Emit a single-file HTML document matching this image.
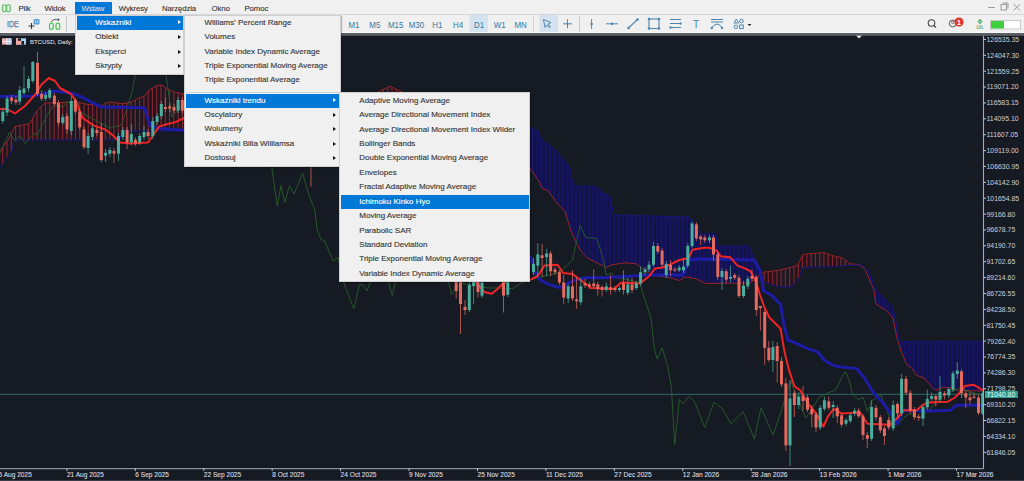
<!DOCTYPE html>
<html><head><meta charset="utf-8"><style>
html,body{margin:0;padding:0;}
body{width:1024px;height:481px;overflow:hidden;position:relative;background:#161a23;font-family:"Liberation Sans",sans-serif;}
.mb{position:absolute;left:0;top:0;width:1024px;height:14px;background:#f0f0f0;}
.mi{position:absolute;top:0;height:14px;line-height:17px;font-size:7.8px;letter-spacing:-0.1px;color:#2b2b2b;-webkit-text-stroke:0.08px #2b2b2b;}
.menu{position:absolute;background:#f0f0f0;border:1px solid #cfcfcf;box-sizing:border-box;box-shadow:1px 1px 1px rgba(0,0,0,0.25);}
.it{position:absolute;left:0;right:0;height:14.4px;font-size:8px;letter-spacing:0px;line-height:14.4px;color:#3a3a3a;white-space:nowrap;-webkit-text-stroke:0.15px #3a3a3a;}
.it.sel{background:#0078d7;color:#ffffff;-webkit-text-stroke:0.12px #ffffff;}
.arr{position:absolute;width:0;height:0;border-top:2.5px solid transparent;border-bottom:2.5px solid transparent;border-left:3px solid #111;top:4.7px;}
.sel .arr{border-left-color:#fff;}
.sep{position:absolute;left:1px;right:1px;height:1px;background:#d4d4d4;}
</style></head><body>
<svg width="1024" height="481" viewBox="0 0 1024 481" style="position:absolute;left:0;top:0"><rect x="0" y="34" width="1024" height="447" fill="#161a23"/><path d="M0.0,151.0 L0.5,150.3 L1.0,149.7 L1.5,149.0 L2.0,148.3 L2.5,147.7 L3.0,147.0 L3.5,146.3 L4.0,145.7 L4.5,145.0 L5.0,144.3 L5.5,143.7 L6.0,143.0 L6.5,142.3 L7.0,141.7 L7.5,141.0 L8.0,140.0 L8.5,139.1 L9.0,138.1 L9.5,137.1 L10.0,136.1 L10.5,135.2 L11.0,134.2 L11.5,133.2 L12.0,132.2 L12.5,131.3 L13.0,130.3 L13.5,129.3 L14.0,128.3 L14.5,127.4 L15.0,126.4 L15.5,126.3 L16.0,126.2 L16.5,126.1 L17.0,126.0 L17.5,125.9 L18.0,125.8 L18.5,125.8 L19.0,125.7 L19.5,125.6 L20.0,125.5 L20.5,125.4 L21.0,125.3 L21.5,125.2 L22.0,125.1 L22.5,125.0 L23.0,124.9 L23.5,124.8 L24.0,124.7 L24.5,124.6 L25.0,124.6 L25.5,124.5 L26.0,124.4 L26.5,124.3 L27.0,124.2 L27.5,124.1 L28.0,124.0 L28.5,123.8 L29.0,123.5 L29.5,123.2 L30.0,123.0 L30.5,122.1 L31.0,121.3 L31.5,120.4 L32.0,119.5 L32.5,118.7 L33.0,117.8 L33.5,116.9 L34.0,116.1 L34.5,115.2 L35.0,114.3 L35.5,113.5 L36.0,112.6 L36.5,111.7 L37.0,110.9 L37.5,110.0 L38.0,109.5 L38.5,109.1 L39.0,108.6 L39.5,108.1 L40.0,107.7 L40.5,107.2 L41.0,106.7 L41.5,106.3 L42.0,105.8 L42.5,105.3 L43.0,104.9 L43.5,104.4 L44.0,103.9 L44.5,103.5 L45.0,103.0 L45.5,103.0 L46.0,103.0 L46.5,103.0 L47.0,102.9 L47.5,102.9 L48.0,102.9 L48.5,102.9 L49.0,102.9 L49.5,102.9 L50.0,102.8 L50.5,102.8 L51.0,102.8 L51.5,102.8 L52.0,102.8 L52.5,102.8 L53.0,102.7 L53.5,102.7 L54.0,102.7 L54.5,102.7 L55.0,102.7 L55.5,102.7 L56.0,102.7 L56.5,102.6 L57.0,102.6 L57.5,102.6 L58.0,102.6 L58.5,102.6 L59.0,102.6 L59.5,102.5 L60.0,102.5 L60.5,102.5 L61.0,102.5 L61.5,102.5 L62.0,102.5 L62.5,102.5 L63.0,102.4 L63.5,102.4 L64.0,102.4 L64.5,102.4 L65.0,102.4 L65.5,102.4 L66.0,102.3 L66.5,102.3 L67.0,102.3 L67.5,102.3 L68.0,102.3 L68.5,102.3 L69.0,102.2 L69.5,102.2 L70.0,102.2 L70.5,102.2 L71.0,102.2 L71.5,102.2 L72.0,102.2 L72.5,102.1 L73.0,102.1 L73.5,102.1 L74.0,102.1 L74.5,102.1 L75.0,102.1 L75.5,102.0 L76.0,102.0 L76.5,102.0 L77.0,102.0 L77.5,102.1 L78.0,102.3 L78.5,102.4 L79.0,102.5 L79.5,102.6 L80.0,102.7 L80.5,102.8 L81.0,102.9 L81.5,103.0 L82.0,103.2 L82.5,103.3 L83.0,103.4 L83.5,103.5 L84.0,103.6 L84.5,103.7 L85.0,103.8 L85.5,104.0 L86.0,104.1 L86.5,104.2 L87.0,104.3 L87.5,104.3 L88.0,104.4 L88.5,104.4 L89.0,104.5 L89.5,104.5 L90.0,104.5 L90.5,104.6 L91.0,104.6 L91.5,104.7 L92.0,104.7 L92.5,104.7 L93.0,104.8 L93.5,104.8 L94.0,104.9 L94.5,104.9 L95.0,104.9 L95.5,105.0 L96.0,105.0 L96.5,105.1 L97.0,105.1 L97.5,105.1 L98.0,105.2 L98.5,105.2 L99.0,105.3 L99.5,105.3 L100.0,105.3 L100.5,105.4 L101.0,105.4 L101.5,105.5 L102.0,105.5 L102.5,105.2 L103.0,104.8 L103.5,104.5 L104.0,104.2 L104.5,103.9 L105.0,103.5 L105.5,103.2 L106.0,103.1 L106.5,103.0 L107.0,102.9 L107.5,102.8 L108.0,102.7 L108.5,102.5 L109.0,102.4 L109.5,102.3 L110.0,102.2 L110.5,102.1 L111.0,102.0 L111.5,102.1 L112.0,102.2 L112.5,102.2 L113.0,102.3 L113.5,102.4 L114.0,102.5 L114.5,102.5 L115.0,102.6 L115.5,102.7 L116.0,102.8 L116.5,102.9 L117.0,102.9 L117.5,103.0 L118.0,103.1 L118.5,103.2 L119.0,103.2 L119.5,103.3 L120.0,103.4 L120.5,103.5 L121.0,103.6 L121.5,103.6 L122.0,103.7 L122.5,103.8 L123.0,103.7 L123.5,103.6 L124.0,103.5 L124.5,103.4 L125.0,103.3 L125.5,103.2 L126.0,103.1 L126.5,103.0 L127.0,102.9 L127.5,102.8 L128.0,102.7 L128.5,102.6 L129.0,102.5 L129.5,102.5 L130.0,102.4 L130.5,102.3 L131.0,102.2 L131.5,102.1 L132.0,101.9 L132.5,101.6 L133.0,101.3 L133.5,101.0 L134.0,100.7 L134.5,100.4 L135.0,100.1 L135.5,99.9 L136.0,99.6 L136.5,99.3 L137.0,99.0 L137.5,98.7 L138.0,98.4 L138.5,98.1 L139.0,97.9 L139.5,97.8 L140.0,97.6 L140.5,97.5 L141.0,97.3 L141.5,97.2 L142.0,97.0 L142.5,96.9 L143.0,96.7 L143.5,96.6 L144.0,96.4 L144.5,96.2 L145.0,95.4 L145.5,94.7 L146.0,93.9 L146.5,93.2 L147.0,92.4 L147.5,91.7 L148.0,91.1 L148.5,90.7 L149.0,90.4 L149.5,90.1 L150.0,89.8 L150.5,89.4 L151.0,89.1 L151.5,88.8 L152.0,88.5 L152.5,88.1 L153.0,87.8 L153.5,87.5 L154.0,87.2 L154.5,86.8 L155.0,86.5 L155.5,86.2 L156.0,86.0 L156.5,85.9 L157.0,85.8 L157.5,85.7 L158.0,85.6 L158.5,85.5 L159.0,85.4 L159.5,85.3 L160.0,85.2 L160.5,85.1 L161.0,85.0 L161.5,84.9 L162.0,85.2 L162.5,85.6 L163.0,85.9 L163.5,86.3 L164.0,86.6 L164.5,87.0 L165.0,87.3 L165.5,87.7 L166.0,88.0 L166.5,88.3 L167.0,88.7 L167.5,89.0 L168.0,89.2 L168.5,89.5 L169.0,89.7 L169.5,90.0 L170.0,90.2 L170.5,90.5 L171.0,90.7 L171.5,91.0 L172.0,91.2 L172.5,91.5 L173.0,91.7 L173.5,91.8 L174.0,91.9 L174.5,92.0 L175.0,92.1 L175.5,92.3 L176.0,92.4 L176.5,92.5 L177.0,92.6 L177.5,92.7 L178.0,92.8 L178.5,92.9 L179.0,93.0 L179.5,93.2 L180.0,93.3 L180.5,93.4 L181.0,93.5 L181.5,93.6 L182.0,93.7 L182.5,93.8 L183.0,93.9 L183.5,94.0 L184.0,94.2 L184.5,94.3 L185.0,94.4 L185.5,94.5 L186.0,94.6 L186.0,131.0 L185.5,131.0 L185.0,131.0 L184.5,131.0 L184.0,131.0 L183.5,131.0 L183.0,131.0 L182.5,131.0 L182.0,131.0 L181.5,131.0 L181.0,131.0 L180.5,131.0 L180.0,131.0 L179.5,131.0 L179.0,131.0 L178.5,131.0 L178.0,131.0 L177.5,131.0 L177.0,131.0 L176.5,131.0 L176.0,131.0 L175.5,131.0 L175.0,131.0 L174.5,131.0 L174.0,131.0 L173.5,131.0 L173.0,131.0 L172.5,131.0 L172.0,131.0 L171.5,131.0 L171.0,131.0 L170.5,131.0 L170.0,131.0 L169.5,131.0 L169.0,131.0 L168.5,131.0 L168.0,131.0 L167.5,131.0 L167.0,131.0 L166.5,131.0 L166.0,131.0 L165.5,131.0 L165.0,131.0 L164.5,131.0 L164.0,131.0 L163.5,131.0 L163.0,131.0 L162.5,131.0 L162.0,131.0 L161.5,131.0 L161.0,131.0 L160.5,131.0 L160.0,131.0 L159.5,131.0 L159.0,131.0 L158.5,131.0 L158.0,131.0 L157.5,131.0 L157.0,131.0 L156.5,131.0 L156.0,131.0 L155.5,131.0 L155.0,131.0 L154.5,131.0 L154.0,131.0 L153.5,131.0 L153.0,131.0 L152.5,131.0 L152.0,131.0 L151.5,131.0 L151.0,131.0 L150.5,131.0 L150.0,131.0 L149.5,131.0 L149.0,131.0 L148.5,131.0 L148.0,131.0 L147.5,131.0 L147.0,131.0 L146.5,131.0 L146.0,131.0 L145.5,131.0 L145.0,131.0 L144.5,131.0 L144.0,131.0 L143.5,131.0 L143.0,131.0 L142.5,131.0 L142.0,131.0 L141.5,131.0 L141.0,131.0 L140.5,131.0 L140.0,131.0 L139.5,131.0 L139.0,131.0 L138.5,131.0 L138.0,131.0 L137.5,131.0 L137.0,131.0 L136.5,131.0 L136.0,131.0 L135.5,131.0 L135.0,131.0 L134.5,131.0 L134.0,131.0 L133.5,131.0 L133.0,131.0 L132.5,131.0 L132.0,131.0 L131.5,131.0 L131.0,131.0 L130.5,131.0 L130.0,131.0 L129.5,131.0 L129.0,131.0 L128.5,131.0 L128.0,131.0 L127.5,131.0 L127.0,131.0 L126.5,131.0 L126.0,131.0 L125.5,131.0 L125.0,131.0 L124.5,131.0 L124.0,131.0 L123.5,131.0 L123.0,131.0 L122.5,131.0 L122.0,131.0 L121.5,133.2 L121.0,135.3 L120.5,137.5 L120.0,139.7 L119.5,139.7 L119.0,139.7 L118.5,139.7 L118.0,139.7 L117.5,139.7 L117.0,139.7 L116.5,139.7 L116.0,139.7 L115.5,139.7 L115.0,139.7 L114.5,139.7 L114.0,139.7 L113.5,139.7 L113.0,139.8 L112.5,139.8 L112.0,139.8 L111.5,139.8 L111.0,139.8 L110.5,139.8 L110.0,139.8 L109.5,139.8 L109.0,139.8 L108.5,139.8 L108.0,139.8 L107.5,139.8 L107.0,139.8 L106.5,139.8 L106.0,139.8 L105.5,139.8 L105.0,139.8 L104.5,139.8 L104.0,139.8 L103.5,139.8 L103.0,139.8 L102.5,139.8 L102.0,139.8 L101.5,139.8 L101.0,139.8 L100.5,139.8 L100.0,139.8 L99.5,139.8 L99.0,139.9 L98.5,139.9 L98.0,139.9 L97.5,139.9 L97.0,139.9 L96.5,139.9 L96.0,139.9 L95.5,139.9 L95.0,139.9 L94.5,139.9 L94.0,139.9 L93.5,139.9 L93.0,139.9 L92.5,139.9 L92.0,139.9 L91.5,139.9 L91.0,139.9 L90.5,139.9 L90.0,139.9 L89.5,139.9 L89.0,139.9 L88.5,139.9 L88.0,139.9 L87.5,139.9 L87.0,139.9 L86.5,139.9 L86.0,139.9 L85.5,140.0 L85.0,140.0 L84.5,140.0 L84.0,140.0 L83.5,140.0 L83.0,140.0 L82.5,140.0 L82.0,140.0 L81.5,140.0 L81.0,140.0 L80.5,140.0 L80.0,140.0 L79.5,140.0 L79.0,140.0 L78.5,140.0 L78.0,140.0 L77.5,140.0 L77.0,140.0 L76.5,140.0 L76.0,140.0 L75.5,140.0 L75.0,140.0 L74.5,140.0 L74.0,140.0 L73.5,140.0 L73.0,140.0 L72.5,140.0 L72.0,140.0 L71.5,140.0 L71.0,140.0 L70.5,140.0 L70.0,140.0 L69.5,140.0 L69.0,140.0 L68.5,140.0 L68.0,140.0 L67.5,140.0 L67.0,140.0 L66.5,140.0 L66.0,140.0 L65.5,140.0 L65.0,140.0 L64.5,140.0 L64.0,140.0 L63.5,140.0 L63.0,140.0 L62.5,140.0 L62.0,140.0 L61.5,140.0 L61.0,140.0 L60.5,140.0 L60.0,140.0 L59.5,140.0 L59.0,140.0 L58.5,140.0 L58.0,140.0 L57.5,140.0 L57.0,140.0 L56.5,140.0 L56.0,140.0 L55.5,140.0 L55.0,140.0 L54.5,140.0 L54.0,140.0 L53.5,140.0 L53.0,140.0 L52.5,140.0 L52.0,140.0 L51.5,140.0 L51.0,140.0 L50.5,140.0 L50.0,140.0 L49.5,140.0 L49.0,140.0 L48.5,140.0 L48.0,140.0 L47.5,140.0 L47.0,140.0 L46.5,140.0 L46.0,140.0 L45.5,140.0 L45.0,140.0 L44.5,140.0 L44.0,140.0 L43.5,140.0 L43.0,140.0 L42.5,140.0 L42.0,140.0 L41.5,140.0 L41.0,140.0 L40.5,140.0 L40.0,140.0 L39.5,140.0 L39.0,140.0 L38.5,140.0 L38.0,140.0 L37.5,140.0 L37.0,140.0 L36.5,140.0 L36.0,140.0 L35.5,140.0 L35.0,140.0 L34.5,140.0 L34.0,140.0 L33.5,140.0 L33.0,140.0 L32.5,140.0 L32.0,140.0 L31.5,140.0 L31.0,140.0 L30.5,140.0 L30.0,140.0 L29.5,140.0 L29.0,140.0 L28.5,140.0 L28.0,140.0 L27.5,140.0 L27.0,140.0 L26.5,140.0 L26.0,140.0 L25.5,140.0 L25.0,140.0 L24.5,140.0 L24.0,140.0 L23.5,140.0 L23.0,140.0 L22.5,140.0 L22.0,140.0 L21.5,140.0 L21.0,140.0 L20.5,140.0 L20.0,140.0 L19.5,140.0 L19.0,140.0 L18.5,140.0 L18.0,140.0 L17.5,140.0 L17.0,140.0 L16.5,140.0 L16.0,140.0 L15.5,140.0 L15.0,140.0 L14.5,140.0 L14.0,140.0 L13.5,142.8 L13.0,145.5 L12.5,148.2 L12.0,151.0 L11.5,151.7 L11.0,152.4 L10.5,153.1 L10.0,153.8 L9.5,154.5 L9.0,155.2 L8.5,156.0 L8.0,156.7 L7.5,157.4 L7.0,158.1 L6.5,158.8 L6.0,159.5 L5.5,160.2 L5.0,160.9 L4.5,161.6 L4.0,162.3 L3.5,163.0 L3.0,163.8 L2.5,164.5 L2.0,165.2 L1.5,165.9 L1.0,166.6 L0.5,167.3 L0.0,168.0Z" fill="#1f1720"/><path d="M372.0,95.0 L372.5,94.8 L373.0,94.5 L373.5,94.2 L374.0,94.0 L374.5,93.8 L375.0,93.5 L375.5,93.2 L376.0,93.0 L376.5,92.8 L377.0,92.5 L377.5,92.2 L378.0,92.0 L378.5,91.8 L379.0,91.5 L379.5,91.2 L380.0,91.0 L380.5,90.8 L381.0,90.5 L381.5,90.2 L382.0,90.0 L382.5,89.8 L383.0,89.5 L383.5,89.3 L384.0,89.1 L384.5,88.8 L385.0,88.6 L385.5,88.4 L386.0,88.2 L386.5,87.9 L387.0,87.7 L387.5,87.5 L388.0,87.2 L388.5,87.0 L389.0,86.8 L389.5,86.5 L390.0,86.3 L390.5,86.5 L391.0,86.8 L391.5,87.0 L392.0,87.2 L392.5,87.5 L393.0,87.7 L393.5,87.9 L394.0,88.2 L394.5,88.4 L395.0,88.6 L395.5,88.8 L396.0,89.1 L396.5,89.3 L397.0,89.5 L397.5,89.8 L398.0,90.0 L398.5,90.2 L399.0,90.5 L399.5,90.8 L400.0,91.0 L400.5,91.2 L401.0,91.5 L401.5,91.8 L402.0,92.0 L402.5,92.2 L403.0,92.5 L403.5,92.8 L404.0,93.0 L404.5,93.2 L405.0,93.5 L405.5,93.8 L406.0,94.0 L406.5,94.2 L407.0,94.5 L407.5,94.8 L408.0,95.0 L408.0,130.0 L407.5,130.0 L407.0,130.0 L406.5,130.0 L406.0,130.0 L405.5,130.0 L405.0,130.0 L404.5,130.0 L404.0,130.0 L403.5,130.0 L403.0,130.0 L402.5,130.0 L402.0,130.0 L401.5,130.0 L401.0,130.0 L400.5,130.0 L400.0,130.0 L399.5,130.0 L399.0,130.0 L398.5,130.0 L398.0,130.0 L397.5,130.0 L397.0,130.0 L396.5,130.0 L396.0,130.0 L395.5,130.0 L395.0,130.0 L394.5,130.0 L394.0,130.0 L393.5,130.0 L393.0,130.0 L392.5,130.0 L392.0,130.0 L391.5,130.0 L391.0,130.0 L390.5,130.0 L390.0,130.0 L389.5,130.0 L389.0,130.0 L388.5,130.0 L388.0,130.0 L387.5,130.0 L387.0,130.0 L386.5,130.0 L386.0,130.0 L385.5,130.0 L385.0,130.0 L384.5,130.0 L384.0,130.0 L383.5,130.0 L383.0,130.0 L382.5,130.0 L382.0,130.0 L381.5,130.0 L381.0,130.0 L380.5,130.0 L380.0,130.0 L379.5,130.0 L379.0,130.0 L378.5,130.0 L378.0,130.0 L377.5,130.0 L377.0,130.0 L376.5,130.0 L376.0,130.0 L375.5,130.0 L375.0,130.0 L374.5,130.0 L374.0,130.0 L373.5,130.0 L373.0,130.0 L372.5,130.0 L372.0,130.0Z" fill="#1f1720"/><path d="M528.0,166.0 L528.5,166.6 L529.0,167.2 L529.5,167.8 L530.0,168.4 L530.5,169.1 L531.0,169.8 L531.5,170.5 L532.0,171.2 L532.5,172.0 L533.0,172.7 L533.5,173.4 L534.0,174.1 L534.5,174.8 L535.0,175.5 L535.5,176.3 L536.0,177.0 L536.5,177.7 L537.0,178.4 L537.5,179.1 L538.0,179.9 L538.5,180.6 L539.0,181.4 L539.5,182.5 L540.0,183.5 L540.5,184.6 L541.0,185.6 L541.5,186.7 L542.0,187.7 L542.5,188.8 L543.0,189.0 L543.5,189.1 L544.0,189.3 L544.5,189.5 L545.0,189.6 L545.5,189.8 L546.0,189.9 L546.5,190.1 L547.0,190.3 L547.5,190.4 L548.0,190.6 L548.5,191.3 L549.0,192.0 L549.5,192.7 L550.0,193.4 L550.5,194.1 L551.0,194.8 L551.5,195.5 L552.0,196.2 L552.5,196.9 L553.0,197.5 L553.5,198.2 L554.0,198.9 L554.5,199.6 L555.0,200.3 L555.5,201.0 L556.0,201.7 L556.5,202.4 L557.0,203.1 L557.5,203.8 L558.0,204.3 L558.5,204.8 L559.0,205.3 L559.5,205.8 L560.0,206.3 L560.5,206.8 L561.0,207.3 L561.5,207.8 L562.0,208.3 L562.5,208.8 L563.0,209.3 L563.5,209.8 L564.0,210.3 L564.5,210.8 L565.0,211.3 L565.5,212.9 L566.0,214.6 L566.5,216.2 L567.0,217.9 L567.5,219.5 L568.0,221.1 L568.5,222.8 L569.0,224.4 L569.5,226.1 L570.0,227.7 L570.5,229.3 L571.0,230.7 L571.5,231.9 L572.0,233.0 L572.5,234.2 L573.0,235.3 L573.5,236.5 L574.0,237.7 L574.5,238.8 L575.0,240.0 L575.5,241.1 L576.0,242.3 L576.5,243.3 L577.0,244.2 L577.5,245.0 L578.0,245.8 L578.5,246.7 L579.0,247.5 L579.5,248.3 L580.0,249.2 L580.5,250.0 L581.0,250.8 L581.5,251.7 L582.0,252.5 L582.5,253.0 L583.0,253.5 L583.5,254.0 L584.0,254.5 L584.5,255.0 L585.0,255.5 L585.5,256.0 L586.0,256.5 L586.5,257.0 L587.0,257.5 L587.5,258.0 L588.0,258.3 L588.5,258.5 L589.0,258.8 L589.5,259.0 L590.0,259.3 L590.5,259.5 L591.0,259.8 L591.5,260.1 L592.0,260.3 L592.5,260.6 L593.0,260.8 L593.5,261.1 L594.0,261.3 L594.5,261.6 L595.0,261.8 L595.5,262.1 L596.0,262.4 L596.5,262.6 L597.0,262.9 L597.5,263.1 L598.0,263.4 L598.5,263.6 L599.0,263.9 L599.5,264.1 L600.0,264.4 L600.5,264.6 L601.0,264.9 L601.5,265.1 L602.0,265.4 L602.5,265.6 L603.0,265.9 L603.5,266.1 L604.0,266.4 L604.5,266.6 L605.0,266.9 L605.5,267.1 L606.0,267.4 L606.5,267.4 L607.0,267.2 L607.5,266.9 L608.0,266.7 L608.5,266.4 L609.0,266.2 L609.5,265.9 L610.0,265.7 L610.5,265.4 L611.0,265.2 L611.5,264.9 L612.0,264.7 L612.5,264.6 L613.0,264.6 L613.5,264.5 L614.0,264.4 L614.5,264.3 L615.0,264.3 L615.5,264.2 L616.0,264.1 L616.5,264.0 L617.0,264.0 L617.5,263.9 L618.0,263.8 L618.5,263.8 L619.0,263.7 L619.5,263.6 L620.0,263.5 L620.5,263.5 L621.0,263.4 L621.5,263.3 L622.0,263.2 L622.5,263.2 L623.0,263.1 L623.5,263.0 L624.0,262.9 L624.5,262.9 L625.0,262.8 L625.5,262.8 L626.0,262.9 L626.5,262.9 L627.0,263.0 L627.5,263.0 L628.0,263.1 L628.5,263.1 L629.0,263.2 L629.5,263.2 L630.0,263.2 L630.5,263.3 L631.0,263.3 L631.5,263.4 L632.0,263.4 L632.5,263.5 L633.0,263.5 L633.5,263.6 L634.0,263.6 L634.5,263.6 L635.0,263.7 L635.5,263.7 L636.0,263.8 L636.5,263.9 L637.0,264.3 L637.5,264.7 L638.0,265.1 L638.5,265.4 L639.0,265.8 L639.5,266.2 L640.0,266.6 L640.5,266.9 L641.0,267.3 L641.5,267.7 L642.0,268.1 L642.5,268.4 L643.0,268.8 L643.5,269.2 L644.0,269.5 L644.5,269.9 L645.0,270.3 L645.5,270.7 L646.0,271.0 L646.5,271.4 L647.0,271.8 L647.5,272.2 L648.0,272.5 L648.5,272.9 L649.0,273.3 L649.5,273.7 L650.0,274.0 L650.5,274.4 L651.0,274.8 L651.5,275.0 L652.0,275.1 L652.5,275.2 L653.0,275.3 L653.5,275.3 L654.0,275.4 L654.5,275.5 L655.0,275.6 L655.5,275.6 L656.0,275.7 L656.5,275.8 L657.0,275.9 L657.5,275.9 L658.0,276.0 L658.5,276.1 L659.0,276.2 L659.5,276.2 L660.0,276.3 L660.5,276.4 L661.0,276.5 L661.5,276.5 L662.0,276.6 L662.5,276.7 L663.0,276.8 L663.5,276.8 L664.0,276.9 L664.5,277.0 L665.0,277.1 L665.5,277.1 L666.0,277.2 L666.5,277.3 L667.0,277.4 L667.5,277.4 L668.0,277.5 L668.5,277.6 L669.0,277.7 L669.5,277.7 L670.0,277.8 L670.5,277.9 L671.0,278.1 L671.5,278.2 L672.0,278.4 L672.5,278.5 L673.0,278.7 L673.5,278.8 L674.0,279.0 L674.5,279.1 L675.0,279.3 L675.5,279.4 L676.0,279.6 L676.5,279.7 L677.0,279.9 L677.5,280.0 L678.0,280.2 L678.5,280.3 L679.0,280.5 L679.5,280.5 L680.0,280.2 L680.5,279.9 L681.0,279.5 L681.5,279.2 L682.0,278.9 L682.5,278.6 L683.0,278.2 L683.5,277.9 L684.0,277.6 L684.5,277.2 L685.0,276.9 L685.5,277.0 L686.0,277.1 L686.5,277.2 L687.0,277.2 L687.5,277.3 L688.0,277.4 L688.5,277.5 L689.0,277.6 L689.5,277.7 L690.0,277.7 L690.5,277.8 L691.0,277.9 L691.5,278.0 L692.0,278.1 L692.5,278.2 L693.0,278.2 L693.5,278.3 L694.0,278.4 L694.5,278.5 L695.0,278.6 L695.5,278.7 L696.0,278.7 L696.5,278.9 L697.0,279.1 L697.5,279.4 L698.0,279.6 L698.5,279.9 L699.0,280.1 L699.5,280.4 L700.0,280.6 L700.5,280.9 L701.0,281.1 L701.5,281.4 L702.0,281.6 L702.5,281.9 L703.0,282.1 L703.5,282.4 L704.0,282.6 L704.5,282.9 L705.0,283.1 L705.5,283.4 L706.0,283.4 L706.5,283.4 L707.0,283.4 L707.5,283.4 L708.0,283.4 L708.5,283.4 L709.0,283.4 L709.5,283.4 L710.0,283.4 L710.5,283.4 L711.0,283.4 L711.5,283.4 L712.0,283.4 L712.5,283.4 L713.0,283.4 L713.5,283.4 L714.0,283.4 L714.5,283.4 L715.0,283.4 L715.5,283.4 L716.0,283.4 L716.5,283.4 L717.0,283.3 L717.5,283.3 L718.0,283.3 L718.5,283.3 L719.0,283.3 L719.5,283.3 L720.0,283.3 L720.5,283.3 L721.0,283.3 L721.5,283.3 L722.0,283.3 L722.5,283.3 L723.0,283.3 L723.5,283.3 L724.0,283.3 L724.5,283.3 L725.0,283.3 L725.5,283.3 L726.0,283.3 L726.5,283.2 L727.0,283.2 L727.5,283.2 L728.0,283.2 L728.5,283.2 L729.0,283.2 L729.5,283.2 L730.0,283.2 L730.5,283.2 L731.0,283.2 L731.5,283.2 L732.0,283.2 L732.5,283.2 L733.0,283.2 L733.5,283.2 L734.0,283.2 L734.5,283.2 L735.0,283.2 L735.5,283.2 L736.0,283.1 L736.5,283.1 L737.0,283.1 L737.5,283.1 L738.0,283.1 L738.5,283.1 L739.0,283.1 L739.5,283.1 L740.0,283.1 L740.5,283.1 L741.0,283.1 L741.5,283.1 L742.0,283.1 L742.5,283.1 L743.0,283.1 L743.5,283.1 L744.0,283.1 L744.5,283.1 L745.0,283.1 L745.5,283.0 L746.0,283.0 L746.5,283.0 L747.0,283.0 L747.5,283.0 L748.0,283.0 L748.5,283.0 L749.0,283.0 L749.5,283.0 L750.0,283.0 L750.5,282.6 L751.0,282.2 L751.5,281.8 L752.0,281.4 L752.5,281.0 L753.0,280.7 L753.5,280.3 L754.0,279.9 L754.5,279.5 L755.0,279.1 L755.5,278.7 L756.0,278.3 L756.5,277.9 L757.0,277.5 L757.5,277.1 L758.0,276.7 L758.5,276.3 L759.0,276.0 L759.5,275.6 L760.0,275.2 L760.5,274.8 L761.0,274.4 L761.0,273.9 L760.5,272.4 L760.0,271.0 L759.5,270.1 L759.0,269.2 L758.5,268.2 L758.0,267.3 L757.5,266.4 L757.0,265.5 L756.5,264.6 L756.0,263.7 L755.5,262.8 L755.0,261.8 L754.5,260.9 L754.0,260.0 L753.5,258.6 L753.0,257.2 L752.5,255.8 L752.0,254.4 L751.5,253.0 L751.0,251.6 L750.5,250.2 L750.0,248.8 L749.5,247.4 L749.0,246.0 L748.5,246.0 L748.0,246.0 L747.5,246.0 L747.0,246.0 L746.5,246.0 L746.0,246.0 L745.5,246.0 L745.0,246.0 L744.5,246.0 L744.0,246.0 L743.5,246.0 L743.0,246.0 L742.5,246.0 L742.0,246.0 L741.5,246.0 L741.0,246.0 L740.5,246.0 L740.0,246.0 L739.5,246.0 L739.0,246.0 L738.5,246.0 L738.0,246.0 L737.5,246.0 L737.0,246.0 L736.5,246.0 L736.0,246.0 L735.5,246.0 L735.0,246.0 L734.5,246.0 L734.0,246.0 L733.5,246.0 L733.0,246.0 L732.5,246.0 L732.0,246.0 L731.5,246.0 L731.0,246.0 L730.5,246.0 L730.0,246.0 L729.5,246.0 L729.0,246.0 L728.5,246.0 L728.0,246.0 L727.5,246.0 L727.0,246.0 L726.5,246.0 L726.0,246.0 L725.5,246.0 L725.0,246.0 L724.5,246.0 L724.0,246.0 L723.5,246.0 L723.0,246.0 L722.5,246.0 L722.0,246.0 L721.5,246.0 L721.0,246.0 L720.5,246.0 L720.0,246.0 L719.5,246.0 L719.0,246.0 L718.5,246.0 L718.0,246.0 L717.5,246.0 L717.0,246.0 L716.5,239.9 L716.0,233.8 L715.5,233.8 L715.0,233.8 L714.5,233.8 L714.0,233.8 L713.5,233.8 L713.0,233.8 L712.5,233.8 L712.0,233.8 L711.5,233.8 L711.0,233.8 L710.5,233.8 L710.0,233.8 L709.5,233.8 L709.0,233.8 L708.5,233.8 L708.0,233.8 L707.5,233.8 L707.0,233.8 L706.5,233.8 L706.0,233.8 L705.5,233.8 L705.0,233.8 L704.5,233.8 L704.0,233.8 L703.5,233.8 L703.0,233.8 L702.5,233.8 L702.0,233.8 L701.5,233.8 L701.0,233.8 L700.5,233.8 L700.0,233.8 L699.5,232.9 L699.0,232.0 L698.5,231.1 L698.0,230.2 L697.5,229.3 L697.0,228.4 L696.5,227.6 L696.0,226.7 L695.5,225.8 L695.0,224.9 L694.5,224.0 L694.0,223.1 L693.5,222.2 L693.0,221.3 L692.5,220.5 L692.0,220.0 L691.5,219.6 L691.0,219.1 L690.5,218.6 L690.0,218.1 L689.5,217.7 L689.0,217.2 L688.5,217.0 L688.0,217.0 L687.5,217.0 L687.0,217.0 L686.5,216.9 L686.0,216.9 L685.5,216.9 L685.0,216.9 L684.5,216.9 L684.0,216.9 L683.5,216.9 L683.0,216.8 L682.5,216.8 L682.0,216.8 L681.5,216.8 L681.0,216.8 L680.5,216.8 L680.0,216.8 L679.5,216.8 L679.0,216.7 L678.5,216.7 L678.0,216.7 L677.5,216.7 L677.0,216.7 L676.5,216.7 L676.0,216.7 L675.5,216.6 L675.0,216.6 L674.5,216.6 L674.0,216.6 L673.5,216.6 L673.0,216.6 L672.5,216.6 L672.0,216.6 L671.5,216.5 L671.0,216.5 L670.5,216.5 L670.0,216.5 L669.5,216.5 L669.0,216.5 L668.5,216.5 L668.0,216.4 L667.5,216.4 L667.0,216.4 L666.5,216.4 L666.0,216.4 L665.5,216.4 L665.0,216.4 L664.5,216.4 L664.0,216.3 L663.5,216.3 L663.0,216.3 L662.5,216.3 L662.0,216.3 L661.5,216.3 L661.0,216.3 L660.5,216.2 L660.0,216.2 L659.5,216.2 L659.0,216.2 L658.5,216.2 L658.0,216.2 L657.5,216.2 L657.0,216.2 L656.5,216.1 L656.0,216.1 L655.5,216.1 L655.0,216.1 L654.5,216.1 L654.0,216.1 L653.5,216.1 L653.0,216.0 L652.5,216.0 L652.0,216.0 L651.5,216.0 L651.0,216.0 L650.5,216.0 L650.0,216.0 L649.5,216.0 L649.0,215.9 L648.5,215.9 L648.0,215.9 L647.5,215.9 L647.0,215.9 L646.5,215.9 L646.0,215.9 L645.5,215.8 L645.0,215.8 L644.5,215.8 L644.0,215.8 L643.5,215.8 L643.0,215.8 L642.5,215.8 L642.0,215.8 L641.5,215.7 L641.0,215.7 L640.5,215.7 L640.0,215.7 L639.5,215.7 L639.0,215.7 L638.5,215.7 L638.0,215.6 L637.5,215.6 L637.0,215.6 L636.5,215.6 L636.0,215.6 L635.5,215.6 L635.0,215.6 L634.5,215.6 L634.0,215.5 L633.5,215.5 L633.0,215.5 L632.5,215.5 L632.0,215.5 L631.5,215.5 L631.0,215.5 L630.5,215.4 L630.0,215.4 L629.5,215.4 L629.0,215.4 L628.5,215.4 L628.0,215.4 L627.5,215.4 L627.0,215.4 L626.5,215.3 L626.0,215.3 L625.5,215.3 L625.0,215.3 L624.5,215.3 L624.0,215.3 L623.5,215.3 L623.0,215.2 L622.5,215.2 L622.0,215.2 L621.5,215.2 L621.0,215.2 L620.5,215.2 L620.0,215.2 L619.5,215.2 L619.0,215.1 L618.5,215.1 L618.0,215.1 L617.5,215.1 L617.0,215.1 L616.5,215.1 L616.0,215.1 L615.5,215.0 L615.0,215.0 L614.5,215.0 L614.0,215.0 L613.5,213.5 L613.0,211.1 L612.5,208.6 L612.0,206.1 L611.5,203.7 L611.0,201.2 L610.5,198.8 L610.0,196.3 L609.5,196.0 L609.0,195.8 L608.5,195.5 L608.0,195.3 L607.5,195.0 L607.0,194.8 L606.5,194.5 L606.0,194.3 L605.5,194.0 L605.0,193.8 L604.5,193.5 L604.0,193.3 L603.5,193.0 L603.0,192.8 L602.5,192.5 L602.0,192.1 L601.5,191.6 L601.0,191.2 L600.5,190.8 L600.0,190.3 L599.5,189.9 L599.0,189.5 L598.5,189.0 L598.0,188.6 L597.5,188.2 L597.0,187.7 L596.5,187.3 L596.0,186.9 L595.5,186.4 L595.0,186.0 L594.5,186.0 L594.0,186.0 L593.5,186.0 L593.0,186.0 L592.5,186.0 L592.0,186.0 L591.5,186.0 L591.0,186.0 L590.5,186.0 L590.0,186.0 L589.5,186.0 L589.0,186.0 L588.5,186.0 L588.0,186.0 L587.5,186.0 L587.0,186.0 L586.5,186.0 L586.0,186.0 L585.5,186.0 L585.0,186.0 L584.5,186.0 L584.0,186.0 L583.5,186.0 L583.0,186.0 L582.5,186.0 L582.0,186.0 L581.5,186.0 L581.0,186.0 L580.5,186.0 L580.0,186.0 L579.5,186.0 L579.0,186.0 L578.5,186.0 L578.0,186.0 L577.5,186.0 L577.0,186.0 L576.5,186.0 L576.0,186.0 L575.5,186.0 L575.0,186.0 L574.5,186.0 L574.0,186.0 L573.5,186.0 L573.0,186.0 L572.5,186.0 L572.0,181.6 L571.5,177.1 L571.0,172.7 L570.5,169.7 L570.0,168.9 L569.5,168.1 L569.0,167.3 L568.5,166.5 L568.0,165.7 L567.5,164.9 L567.0,164.2 L566.5,163.4 L566.0,162.6 L565.5,161.8 L565.0,161.0 L564.5,160.4 L564.0,159.8 L563.5,159.2 L563.0,158.7 L562.5,158.1 L562.0,157.5 L561.5,156.9 L561.0,156.3 L560.5,155.7 L560.0,155.1 L559.5,154.6 L559.0,154.0 L558.5,153.4 L558.0,152.8 L557.5,152.2 L557.0,151.6 L556.5,151.1 L556.0,150.5 L555.5,149.9 L555.0,149.6 L554.5,149.2 L554.0,148.8 L553.5,148.5 L553.0,148.1 L552.5,147.7 L552.0,147.3 L551.5,147.0 L551.0,146.6 L550.5,146.2 L550.0,145.9 L549.5,145.5 L549.0,145.1 L548.5,144.8 L548.0,144.4 L547.5,144.1 L547.0,143.7 L546.5,143.4 L546.0,143.0 L545.5,142.7 L545.0,142.3 L544.5,142.0 L544.0,141.6 L543.5,141.3 L543.0,140.9 L542.5,140.6 L542.0,139.7 L541.5,138.7 L541.0,137.8 L540.5,136.9 L540.0,135.9 L539.5,135.0 L539.0,134.0 L538.5,133.1 L538.0,132.2 L537.5,131.2 L537.0,130.3 L536.5,130.1 L536.0,129.9 L535.5,129.7 L535.0,129.5 L534.5,129.3 L534.0,129.0 L533.5,128.8 L533.0,128.6 L532.5,128.4 L532.0,128.2 L531.5,128.0 L531.0,127.8 L530.5,127.6 L530.0,127.3 L529.5,127.0 L529.0,126.7 L528.5,126.3 L528.0,126.0Z" fill="#121440"/><path d="M761.0,274.4 L761.5,274.0 L762.0,273.6 L762.5,273.2 L763.0,272.8 L763.5,272.4 L764.0,272.2 L764.5,272.1 L765.0,272.0 L765.5,272.0 L766.0,271.9 L766.5,271.9 L767.0,271.8 L767.5,271.7 L768.0,271.7 L768.5,271.6 L769.0,271.5 L769.5,271.5 L770.0,271.4 L770.5,271.4 L771.0,271.3 L771.5,271.2 L772.0,271.2 L772.5,271.1 L773.0,271.0 L773.5,271.0 L774.0,270.9 L774.5,270.8 L775.0,270.8 L775.5,270.7 L776.0,270.7 L776.5,270.6 L777.0,270.5 L777.5,270.5 L778.0,270.4 L778.5,270.3 L779.0,270.2 L779.5,270.1 L780.0,270.0 L780.5,269.9 L781.0,269.7 L781.5,269.6 L782.0,269.5 L782.5,269.4 L783.0,269.2 L783.5,269.1 L784.0,269.0 L784.5,268.9 L785.0,268.7 L785.5,268.6 L786.0,268.5 L786.5,268.4 L787.0,268.2 L787.5,268.1 L788.0,268.0 L788.5,267.9 L789.0,267.7 L789.5,267.6 L790.0,267.5 L790.5,267.4 L791.0,267.2 L791.5,267.1 L792.0,267.0 L792.5,266.9 L793.0,266.7 L793.5,266.6 L794.0,266.5 L794.5,266.4 L795.0,266.2 L795.5,266.1 L796.0,266.0 L796.5,265.9 L797.0,265.7 L797.5,265.6 L798.0,264.6 L798.5,263.6 L799.0,262.5 L799.5,261.5 L800.0,260.5 L800.5,259.5 L801.0,258.5 L801.5,257.5 L802.0,256.4 L802.5,255.4 L803.0,254.4 L803.5,254.4 L804.0,254.3 L804.5,254.3 L805.0,254.2 L805.5,254.2 L806.0,254.1 L806.5,254.1 L807.0,254.0 L807.5,254.0 L808.0,253.9 L808.5,253.9 L809.0,253.9 L809.5,253.8 L810.0,253.8 L810.5,253.7 L811.0,253.7 L811.5,253.6 L812.0,253.6 L812.5,253.5 L813.0,253.5 L813.5,253.4 L814.0,253.4 L814.5,253.3 L815.0,253.3 L815.5,253.3 L816.0,253.2 L816.5,253.2 L817.0,253.1 L817.5,253.1 L818.0,253.0 L818.5,253.0 L819.0,252.9 L819.5,252.9 L820.0,252.8 L820.5,252.8 L821.0,252.8 L821.5,252.7 L822.0,252.7 L822.5,252.6 L823.0,252.6 L823.5,252.5 L824.0,252.6 L824.5,252.8 L825.0,252.9 L825.5,253.1 L826.0,253.3 L826.5,253.5 L827.0,253.7 L827.5,253.9 L828.0,254.1 L828.5,254.3 L829.0,254.4 L829.5,254.6 L830.0,254.8 L830.5,255.0 L831.0,255.2 L831.5,255.3 L832.0,255.5 L832.5,255.6 L833.0,255.7 L833.5,255.8 L834.0,256.0 L834.5,256.1 L835.0,256.2 L835.5,256.3 L836.0,256.4 L836.5,256.6 L837.0,256.7 L837.5,256.8 L838.0,256.9 L838.5,257.0 L839.0,257.2 L839.5,257.3 L840.0,257.4 L840.5,257.5 L841.0,257.6 L841.5,257.8 L842.0,257.9 L842.5,258.0 L843.0,258.4 L843.5,258.8 L844.0,259.2 L844.5,259.5 L845.0,259.9 L845.5,260.3 L846.0,260.7 L846.5,261.1 L847.0,261.5 L847.5,261.9 L848.0,262.3 L848.5,262.6 L849.0,263.0 L849.5,263.4 L850.0,263.8 L850.5,263.8 L851.0,263.9 L851.5,263.9 L852.0,264.0 L852.5,264.0 L853.0,264.1 L853.5,264.1 L854.0,264.2 L854.5,264.2 L855.0,264.3 L855.5,264.3 L856.0,264.4 L856.5,264.4 L857.0,264.5 L857.5,264.5 L858.0,264.6 L858.5,264.6 L859.0,264.7 L859.5,264.8 L859.5,264.8 L859.0,264.8 L858.5,264.9 L858.0,264.9 L857.5,264.9 L857.0,265.0 L856.5,265.0 L856.0,265.0 L855.5,265.0 L855.0,265.1 L854.5,265.1 L854.0,265.1 L853.5,265.2 L853.0,265.2 L852.5,265.2 L852.0,265.3 L851.5,265.3 L851.0,265.3 L850.5,265.4 L850.0,265.4 L849.5,265.4 L849.0,265.5 L848.5,265.5 L848.0,265.5 L847.5,265.6 L847.0,265.6 L846.5,265.6 L846.0,265.6 L845.5,265.7 L845.0,265.7 L844.5,265.7 L844.0,265.8 L843.5,265.8 L843.0,265.8 L842.5,265.9 L842.0,265.9 L841.5,265.9 L841.0,266.0 L840.5,266.0 L840.0,266.0 L839.5,266.1 L839.0,266.1 L838.5,266.1 L838.0,266.2 L837.5,266.2 L837.0,266.2 L836.5,266.3 L836.0,266.3 L835.5,266.3 L835.0,266.3 L834.5,266.4 L834.0,266.4 L833.5,266.4 L833.0,266.5 L832.5,266.5 L832.0,266.5 L831.5,266.6 L831.0,266.6 L830.5,266.6 L830.0,266.6 L829.5,266.6 L829.0,266.7 L828.5,266.7 L828.0,266.7 L827.5,266.7 L827.0,266.7 L826.5,266.7 L826.0,266.8 L825.5,266.8 L825.0,266.8 L824.5,266.8 L824.0,266.8 L823.5,266.8 L823.0,266.9 L822.5,266.9 L822.0,266.9 L821.5,266.9 L821.0,266.9 L820.5,266.9 L820.0,267.0 L819.5,267.0 L819.0,267.0 L818.5,267.0 L818.0,267.0 L817.5,267.0 L817.0,267.1 L816.5,267.1 L816.0,267.1 L815.5,267.1 L815.0,267.1 L814.5,267.1 L814.0,267.1 L813.5,267.2 L813.0,267.2 L812.5,267.2 L812.0,267.2 L811.5,267.2 L811.0,267.2 L810.5,267.3 L810.0,267.3 L809.5,267.3 L809.0,267.3 L808.5,267.3 L808.0,267.3 L807.5,267.4 L807.0,267.4 L806.5,267.4 L806.0,267.4 L805.5,267.4 L805.0,267.4 L804.5,267.5 L804.0,267.5 L803.5,267.5 L803.0,267.5 L802.5,268.8 L802.0,270.1 L801.5,271.5 L801.0,272.8 L800.5,274.1 L800.0,275.4 L799.5,276.7 L799.0,277.5 L798.5,278.2 L798.0,278.9 L797.5,279.6 L797.0,280.2 L796.5,280.9 L796.0,281.6 L795.5,282.3 L795.0,282.9 L794.5,283.6 L794.0,284.3 L793.5,285.0 L793.0,285.6 L792.5,286.3 L792.0,287.0 L791.5,287.0 L791.0,287.0 L790.5,287.0 L790.0,287.0 L789.5,287.0 L789.0,287.0 L788.5,287.0 L788.0,287.0 L787.5,287.0 L787.0,287.0 L786.5,287.0 L786.0,287.0 L785.5,287.0 L785.0,287.0 L784.5,287.0 L784.0,287.0 L783.5,287.0 L783.0,287.0 L782.5,287.0 L782.0,287.0 L781.5,287.0 L781.0,287.0 L780.5,287.0 L780.0,287.0 L779.5,287.0 L779.0,287.0 L778.5,286.9 L778.0,286.7 L777.5,286.6 L777.0,286.4 L776.5,286.2 L776.0,286.1 L775.5,285.9 L775.0,285.7 L774.5,285.6 L774.0,285.4 L773.5,285.2 L773.0,285.1 L772.5,284.9 L772.0,284.7 L771.5,284.6 L771.0,284.4 L770.5,284.2 L770.0,284.1 L769.5,283.9 L769.0,283.7 L768.5,283.6 L768.0,283.4 L767.5,283.2 L767.0,283.1 L766.5,282.9 L766.0,282.7 L765.5,282.6 L765.0,282.4 L764.5,282.2 L764.0,282.1 L763.5,281.1 L763.0,279.7 L762.5,278.2 L762.0,276.8 L761.5,275.3 L761.0,273.9Z" fill="#1f1720"/><path d="M859.5,264.8 L860.0,265.2 L860.5,265.6 L861.0,266.0 L861.5,266.5 L862.0,266.9 L862.5,267.3 L863.0,267.7 L863.5,268.1 L864.0,268.6 L864.5,269.0 L865.0,269.4 L865.5,270.5 L866.0,271.7 L866.5,272.8 L867.0,274.0 L867.5,275.1 L868.0,276.3 L868.5,277.4 L869.0,278.6 L869.5,279.7 L870.0,280.8 L870.5,282.0 L871.0,283.1 L871.5,284.3 L872.0,285.4 L872.5,286.6 L873.0,287.7 L873.5,288.9 L874.0,290.0 L874.5,293.5 L875.0,297.0 L875.5,300.5 L876.0,304.0 L876.5,304.3 L877.0,304.6 L877.5,305.0 L878.0,305.3 L878.5,305.6 L879.0,305.9 L879.5,306.2 L880.0,306.5 L880.5,306.9 L881.0,307.2 L881.5,307.5 L882.0,307.8 L882.5,308.1 L883.0,308.4 L883.5,308.8 L884.0,309.1 L884.5,309.4 L885.0,309.7 L885.5,310.0 L886.0,310.3 L886.5,310.7 L887.0,311.3 L887.5,311.8 L888.0,312.4 L888.5,313.0 L889.0,313.5 L889.5,314.1 L890.0,314.6 L890.5,315.2 L891.0,315.8 L891.5,316.3 L892.0,316.9 L892.5,317.4 L893.0,318.0 L893.5,320.6 L894.0,323.1 L894.5,325.7 L895.0,328.3 L895.5,330.8 L896.0,333.4 L896.5,336.0 L897.0,338.0 L897.5,339.6 L898.0,341.1 L898.5,342.7 L899.0,344.3 L899.5,345.9 L900.0,347.5 L900.5,349.1 L901.0,350.7 L901.5,352.2 L902.0,353.4 L902.5,354.6 L903.0,355.7 L903.5,356.9 L904.0,358.0 L904.5,359.2 L905.0,360.4 L905.5,361.5 L906.0,362.7 L906.5,363.8 L907.0,365.0 L907.5,365.3 L908.0,365.7 L908.5,366.0 L909.0,366.4 L909.5,366.7 L910.0,367.0 L910.5,367.4 L911.0,367.7 L911.5,368.1 L912.0,368.4 L912.5,368.7 L913.0,369.5 L913.5,370.3 L914.0,371.2 L914.5,372.1 L915.0,372.9 L915.5,373.8 L916.0,374.6 L916.5,375.3 L917.0,375.5 L917.5,375.7 L918.0,375.9 L918.5,376.0 L919.0,376.2 L919.5,376.4 L920.0,376.6 L920.5,376.8 L921.0,376.9 L921.5,377.1 L922.0,377.3 L922.5,377.5 L923.0,377.6 L923.5,377.8 L924.0,378.0 L924.5,378.6 L925.0,379.1 L925.5,379.7 L926.0,380.3 L926.5,380.9 L927.0,381.5 L927.5,382.0 L928.0,382.6 L928.5,383.2 L929.0,383.7 L929.5,384.3 L930.0,384.8 L930.5,385.4 L931.0,385.9 L931.5,386.5 L932.0,387.1 L932.5,387.6 L933.0,388.2 L933.5,388.7 L934.0,389.3 L934.5,389.8 L935.0,390.4 L935.5,390.2 L936.0,390.0 L936.5,389.8 L937.0,389.6 L937.5,389.4 L938.0,389.2 L938.5,389.0 L939.0,388.8 L939.5,388.7 L940.0,388.5 L940.5,388.3 L941.0,388.1 L941.5,387.9 L942.0,387.7 L942.5,387.6 L943.0,387.6 L943.5,387.6 L944.0,387.6 L944.5,387.6 L945.0,387.6 L945.5,387.6 L946.0,387.6 L946.5,387.6 L947.0,387.6 L947.5,387.6 L948.0,387.6 L948.5,387.6 L949.0,387.6 L949.5,387.7 L950.0,387.9 L950.5,388.0 L951.0,388.2 L951.5,388.4 L952.0,388.5 L952.5,388.7 L953.0,388.9 L953.5,389.0 L954.0,389.2 L954.5,389.3 L955.0,389.5 L955.5,389.7 L956.0,389.8 L956.5,390.0 L957.0,390.2 L957.5,390.3 L958.0,390.4 L958.5,390.4 L959.0,390.4 L959.5,390.4 L960.0,390.5 L960.5,390.5 L961.0,390.5 L961.5,390.5 L962.0,390.5 L962.5,390.5 L963.0,390.5 L963.5,390.5 L964.0,390.5 L964.5,390.6 L965.0,390.6 L965.5,390.6 L966.0,390.6 L966.5,390.6 L967.0,390.6 L967.5,390.6 L968.0,390.6 L968.5,390.7 L969.0,390.7 L969.5,390.7 L970.0,390.7 L970.5,390.7 L971.0,390.7 L971.5,390.7 L972.0,390.7 L972.5,390.8 L973.0,390.8 L973.5,390.8 L974.0,390.8 L974.5,390.8 L975.0,390.8 L975.5,390.8 L976.0,390.8 L976.5,390.8 L977.0,390.9 L977.5,390.9 L978.0,390.9 L978.5,390.9 L979.0,390.9 L979.5,390.9 L980.0,390.9 L980.5,390.9 L981.0,391.0 L981.5,391.0 L982.0,391.0 L982.5,391.0 L983.0,391.0 L983.0,341.6 L982.5,341.6 L982.0,341.6 L981.5,341.6 L981.0,341.6 L980.5,341.6 L980.0,341.6 L979.5,341.6 L979.0,341.6 L978.5,341.6 L978.0,341.6 L977.5,341.6 L977.0,341.6 L976.5,341.6 L976.0,341.6 L975.5,341.6 L975.0,341.6 L974.5,341.6 L974.0,341.6 L973.5,341.6 L973.0,341.6 L972.5,341.6 L972.0,341.6 L971.5,341.6 L971.0,341.6 L970.5,341.6 L970.0,341.6 L969.5,341.6 L969.0,341.6 L968.5,341.6 L968.0,341.6 L967.5,341.6 L967.0,341.6 L966.5,341.6 L966.0,341.6 L965.5,341.6 L965.0,341.6 L964.5,341.6 L964.0,341.6 L963.5,341.6 L963.0,341.6 L962.5,341.6 L962.0,341.6 L961.5,341.6 L961.0,341.6 L960.5,341.6 L960.0,341.6 L959.5,341.6 L959.0,341.6 L958.5,341.6 L958.0,341.6 L957.5,341.6 L957.0,341.6 L956.5,341.6 L956.0,341.6 L955.5,341.6 L955.0,341.6 L954.5,341.6 L954.0,341.6 L953.5,341.6 L953.0,341.6 L952.5,341.6 L952.0,341.6 L951.5,341.6 L951.0,341.6 L950.5,341.6 L950.0,341.6 L949.5,341.6 L949.0,341.6 L948.5,341.6 L948.0,341.6 L947.5,341.6 L947.0,341.6 L946.5,341.6 L946.0,341.6 L945.5,341.6 L945.0,341.6 L944.5,341.6 L944.0,341.6 L943.5,341.6 L943.0,341.6 L942.5,341.6 L942.0,341.6 L941.5,341.6 L941.0,341.6 L940.5,341.6 L940.0,341.6 L939.5,341.6 L939.0,341.6 L938.5,341.6 L938.0,341.6 L937.5,341.6 L937.0,341.6 L936.5,341.6 L936.0,341.6 L935.5,341.6 L935.0,341.6 L934.5,341.6 L934.0,341.6 L933.5,341.6 L933.0,341.6 L932.5,341.6 L932.0,341.6 L931.5,341.6 L931.0,341.6 L930.5,341.6 L930.0,341.6 L929.5,341.6 L929.0,341.6 L928.5,341.6 L928.0,341.6 L927.5,341.6 L927.0,341.6 L926.5,341.6 L926.0,341.6 L925.5,341.6 L925.0,341.6 L924.5,341.6 L924.0,341.6 L923.5,341.6 L923.0,341.6 L922.5,341.6 L922.0,341.6 L921.5,341.6 L921.0,341.6 L920.5,341.6 L920.0,341.6 L919.5,341.6 L919.0,341.6 L918.5,341.6 L918.0,341.6 L917.5,341.6 L917.0,341.6 L916.5,341.6 L916.0,341.6 L915.5,341.6 L915.0,341.6 L914.5,341.6 L914.0,341.6 L913.5,341.6 L913.0,341.6 L912.5,341.6 L912.0,341.6 L911.5,341.6 L911.0,341.6 L910.5,341.6 L910.0,341.6 L909.5,341.6 L909.0,341.6 L908.5,341.6 L908.0,341.6 L907.5,341.6 L907.0,341.6 L906.5,341.6 L906.0,341.6 L905.5,341.6 L905.0,341.6 L904.5,341.6 L904.0,341.6 L903.5,341.6 L903.0,341.6 L902.5,341.6 L902.0,341.6 L901.5,341.6 L901.0,341.6 L900.5,341.6 L900.0,341.6 L899.5,341.6 L899.0,338.9 L898.5,336.2 L898.0,333.4 L897.5,330.7 L897.0,328.0 L896.5,325.3 L896.0,322.5 L895.5,319.8 L895.0,317.1 L894.5,315.0 L894.0,313.4 L893.5,311.8 L893.0,310.2 L892.5,308.5 L892.0,306.9 L891.5,306.4 L891.0,305.8 L890.5,305.3 L890.0,304.7 L889.5,304.2 L889.0,303.7 L888.5,303.1 L888.0,302.6 L887.5,302.1 L887.0,301.5 L886.5,301.0 L886.0,300.4 L885.5,299.9 L885.0,299.4 L884.5,298.8 L884.0,298.3 L883.5,297.8 L883.0,297.2 L882.5,296.7 L882.0,296.1 L881.5,295.6 L881.0,295.1 L880.5,294.5 L880.0,294.0 L879.5,293.4 L879.0,292.9 L878.5,292.4 L878.0,291.8 L877.5,291.3 L877.0,290.8 L876.5,290.2 L876.0,289.3 L875.5,288.0 L875.0,286.8 L874.5,285.5 L874.0,284.3 L873.5,283.0 L873.0,281.8 L872.5,280.5 L872.0,279.3 L871.5,278.0 L871.0,276.8 L870.5,275.5 L870.0,274.3 L869.5,273.0 L869.0,271.8 L868.5,271.0 L868.0,270.6 L867.5,270.2 L867.0,269.8 L866.5,269.4 L866.0,268.9 L865.5,268.5 L865.0,268.1 L864.5,267.7 L864.0,267.2 L863.5,266.8 L863.0,266.4 L862.5,266.0 L862.0,265.5 L861.5,265.1 L861.0,264.7 L860.5,264.7 L860.0,264.8 L859.5,264.8Z" fill="#121440"/><line x1="2.7" y1="147.3" x2="2.7" y2="164.1" stroke="#8a2630" stroke-width="1.1"/><line x1="7.0" y1="141.6" x2="7.0" y2="158.1" stroke="#8a2630" stroke-width="1.1"/><line x1="11.3" y1="133.6" x2="11.3" y2="152.0" stroke="#8a2630" stroke-width="1.1"/><line x1="15.6" y1="126.3" x2="15.6" y2="140.0" stroke="#8a2630" stroke-width="1.1"/><line x1="19.9" y1="125.5" x2="19.9" y2="140.0" stroke="#8a2630" stroke-width="1.1"/><line x1="24.1" y1="124.7" x2="24.1" y2="140.0" stroke="#8a2630" stroke-width="1.1"/><line x1="28.4" y1="123.8" x2="28.4" y2="140.0" stroke="#8a2630" stroke-width="1.1"/><line x1="32.7" y1="118.3" x2="32.7" y2="140.0" stroke="#8a2630" stroke-width="1.1"/><line x1="37.0" y1="110.9" x2="37.0" y2="140.0" stroke="#8a2630" stroke-width="1.1"/><line x1="41.2" y1="106.5" x2="41.2" y2="140.0" stroke="#8a2630" stroke-width="1.1"/><line x1="45.5" y1="103.0" x2="45.5" y2="140.0" stroke="#8a2630" stroke-width="1.1"/><line x1="49.8" y1="102.8" x2="49.8" y2="140.0" stroke="#8a2630" stroke-width="1.1"/><line x1="54.1" y1="102.7" x2="54.1" y2="140.0" stroke="#8a2630" stroke-width="1.1"/><line x1="58.3" y1="102.6" x2="58.3" y2="140.0" stroke="#8a2630" stroke-width="1.1"/><line x1="62.6" y1="102.4" x2="62.6" y2="140.0" stroke="#8a2630" stroke-width="1.1"/><line x1="66.9" y1="102.3" x2="66.9" y2="140.0" stroke="#8a2630" stroke-width="1.1"/><line x1="71.2" y1="102.2" x2="71.2" y2="140.0" stroke="#8a2630" stroke-width="1.1"/><line x1="75.5" y1="102.0" x2="75.5" y2="140.0" stroke="#8a2630" stroke-width="1.1"/><line x1="79.7" y1="102.6" x2="79.7" y2="140.0" stroke="#8a2630" stroke-width="1.1"/><line x1="84.0" y1="103.6" x2="84.0" y2="140.0" stroke="#8a2630" stroke-width="1.1"/><line x1="88.3" y1="104.4" x2="88.3" y2="139.9" stroke="#8a2630" stroke-width="1.1"/><line x1="92.6" y1="104.7" x2="92.6" y2="139.9" stroke="#8a2630" stroke-width="1.1"/><line x1="96.8" y1="105.1" x2="96.8" y2="139.9" stroke="#8a2630" stroke-width="1.1"/><line x1="101.1" y1="105.4" x2="101.1" y2="139.8" stroke="#8a2630" stroke-width="1.1"/><line x1="105.4" y1="103.3" x2="105.4" y2="139.8" stroke="#8a2630" stroke-width="1.1"/><line x1="109.7" y1="102.3" x2="109.7" y2="139.8" stroke="#8a2630" stroke-width="1.1"/><line x1="113.9" y1="102.5" x2="113.9" y2="139.7" stroke="#8a2630" stroke-width="1.1"/><line x1="118.2" y1="103.1" x2="118.2" y2="139.7" stroke="#8a2630" stroke-width="1.1"/><line x1="122.5" y1="103.8" x2="122.5" y2="131.0" stroke="#8a2630" stroke-width="1.1"/><line x1="126.8" y1="103.0" x2="126.8" y2="131.0" stroke="#8a2630" stroke-width="1.1"/><line x1="131.1" y1="102.1" x2="131.1" y2="131.0" stroke="#8a2630" stroke-width="1.1"/><line x1="135.3" y1="100.0" x2="135.3" y2="131.0" stroke="#8a2630" stroke-width="1.1"/><line x1="139.6" y1="97.7" x2="139.6" y2="131.0" stroke="#8a2630" stroke-width="1.1"/><line x1="143.9" y1="96.5" x2="143.9" y2="131.0" stroke="#8a2630" stroke-width="1.1"/><line x1="148.2" y1="91.0" x2="148.2" y2="131.0" stroke="#8a2630" stroke-width="1.1"/><line x1="152.4" y1="88.2" x2="152.4" y2="131.0" stroke="#8a2630" stroke-width="1.1"/><line x1="156.7" y1="85.8" x2="156.7" y2="131.0" stroke="#8a2630" stroke-width="1.1"/><line x1="161.0" y1="85.0" x2="161.0" y2="131.0" stroke="#8a2630" stroke-width="1.1"/><line x1="165.3" y1="87.5" x2="165.3" y2="131.0" stroke="#8a2630" stroke-width="1.1"/><line x1="169.5" y1="90.0" x2="169.5" y2="131.0" stroke="#8a2630" stroke-width="1.1"/><line x1="173.8" y1="91.9" x2="173.8" y2="131.0" stroke="#8a2630" stroke-width="1.1"/><line x1="178.1" y1="92.8" x2="178.1" y2="131.0" stroke="#8a2630" stroke-width="1.1"/><line x1="182.4" y1="93.8" x2="182.4" y2="131.0" stroke="#8a2630" stroke-width="1.1"/><line x1="374.8" y1="93.6" x2="374.8" y2="130.0" stroke="#8a2630" stroke-width="1.1"/><line x1="379.1" y1="91.4" x2="379.1" y2="130.0" stroke="#8a2630" stroke-width="1.1"/><line x1="383.4" y1="89.4" x2="383.4" y2="130.0" stroke="#8a2630" stroke-width="1.1"/><line x1="387.7" y1="87.4" x2="387.7" y2="130.0" stroke="#8a2630" stroke-width="1.1"/><line x1="392.0" y1="87.2" x2="392.0" y2="130.0" stroke="#8a2630" stroke-width="1.1"/><line x1="396.2" y1="89.2" x2="396.2" y2="130.0" stroke="#8a2630" stroke-width="1.1"/><line x1="400.5" y1="91.3" x2="400.5" y2="130.0" stroke="#8a2630" stroke-width="1.1"/><line x1="404.8" y1="93.4" x2="404.8" y2="130.0" stroke="#8a2630" stroke-width="1.1"/><line x1="528.8" y1="126.5" x2="528.8" y2="167.0" stroke="#161462" stroke-width="2.6"/><line x1="533.1" y1="128.7" x2="533.1" y2="172.8" stroke="#161462" stroke-width="2.6"/><line x1="537.4" y1="131.0" x2="537.4" y2="178.9" stroke="#161462" stroke-width="2.6"/><line x1="541.6" y1="139.0" x2="541.6" y2="187.0" stroke="#161462" stroke-width="2.6"/><line x1="545.9" y1="143.0" x2="545.9" y2="189.9" stroke="#161462" stroke-width="2.6"/><line x1="550.2" y1="146.0" x2="550.2" y2="193.7" stroke="#161462" stroke-width="2.6"/><line x1="554.5" y1="149.2" x2="554.5" y2="199.6" stroke="#161462" stroke-width="2.6"/><line x1="558.8" y1="153.7" x2="558.8" y2="205.1" stroke="#161462" stroke-width="2.6"/><line x1="563.0" y1="158.7" x2="563.0" y2="209.3" stroke="#161462" stroke-width="2.6"/><line x1="567.3" y1="164.6" x2="567.3" y2="218.9" stroke="#161462" stroke-width="2.6"/><line x1="571.6" y1="177.9" x2="571.6" y2="232.1" stroke="#161462" stroke-width="2.6"/><line x1="575.9" y1="186.0" x2="575.9" y2="242.0" stroke="#161462" stroke-width="2.6"/><line x1="580.1" y1="186.0" x2="580.1" y2="249.4" stroke="#161462" stroke-width="2.6"/><line x1="584.4" y1="186.0" x2="584.4" y2="254.9" stroke="#161462" stroke-width="2.6"/><line x1="588.7" y1="186.0" x2="588.7" y2="258.6" stroke="#161462" stroke-width="2.6"/><line x1="593.0" y1="186.0" x2="593.0" y2="260.8" stroke="#161462" stroke-width="2.6"/><line x1="597.2" y1="187.9" x2="597.2" y2="263.0" stroke="#161462" stroke-width="2.6"/><line x1="601.5" y1="191.7" x2="601.5" y2="265.1" stroke="#161462" stroke-width="2.6"/><line x1="605.8" y1="194.2" x2="605.8" y2="267.3" stroke="#161462" stroke-width="2.6"/><line x1="610.1" y1="196.7" x2="610.1" y2="265.6" stroke="#161462" stroke-width="2.6"/><line x1="614.4" y1="215.0" x2="614.4" y2="264.4" stroke="#161462" stroke-width="2.6"/><line x1="618.6" y1="215.1" x2="618.6" y2="263.7" stroke="#161462" stroke-width="2.6"/><line x1="622.9" y1="215.2" x2="622.9" y2="263.1" stroke="#161462" stroke-width="2.6"/><line x1="627.2" y1="215.4" x2="627.2" y2="263.0" stroke="#161462" stroke-width="2.6"/><line x1="631.5" y1="215.5" x2="631.5" y2="263.4" stroke="#161462" stroke-width="2.6"/><line x1="635.7" y1="215.6" x2="635.7" y2="263.8" stroke="#161462" stroke-width="2.6"/><line x1="640.0" y1="215.7" x2="640.0" y2="266.6" stroke="#161462" stroke-width="2.6"/><line x1="644.3" y1="215.8" x2="644.3" y2="269.8" stroke="#161462" stroke-width="2.6"/><line x1="648.6" y1="215.9" x2="648.6" y2="273.0" stroke="#161462" stroke-width="2.6"/><line x1="652.8" y1="216.0" x2="652.8" y2="275.2" stroke="#161462" stroke-width="2.6"/><line x1="657.1" y1="216.2" x2="657.1" y2="275.9" stroke="#161462" stroke-width="2.6"/><line x1="661.4" y1="216.3" x2="661.4" y2="276.5" stroke="#161462" stroke-width="2.6"/><line x1="665.7" y1="216.4" x2="665.7" y2="277.2" stroke="#161462" stroke-width="2.6"/><line x1="670.0" y1="216.5" x2="670.0" y2="277.8" stroke="#161462" stroke-width="2.6"/><line x1="674.2" y1="216.6" x2="674.2" y2="279.1" stroke="#161462" stroke-width="2.6"/><line x1="678.5" y1="216.7" x2="678.5" y2="280.3" stroke="#161462" stroke-width="2.6"/><line x1="682.8" y1="216.8" x2="682.8" y2="278.4" stroke="#161462" stroke-width="2.6"/><line x1="687.1" y1="217.0" x2="687.1" y2="277.2" stroke="#161462" stroke-width="2.6"/><line x1="691.3" y1="219.4" x2="691.3" y2="278.0" stroke="#161462" stroke-width="2.6"/><line x1="695.6" y1="226.0" x2="695.6" y2="278.7" stroke="#161462" stroke-width="2.6"/><line x1="699.9" y1="233.6" x2="699.9" y2="280.6" stroke="#161462" stroke-width="2.6"/><line x1="704.2" y1="233.8" x2="704.2" y2="282.7" stroke="#161462" stroke-width="2.6"/><line x1="708.5" y1="233.8" x2="708.5" y2="283.4" stroke="#161462" stroke-width="2.6"/><line x1="712.7" y1="233.8" x2="712.7" y2="283.4" stroke="#161462" stroke-width="2.6"/><line x1="717.0" y1="246.0" x2="717.0" y2="283.3" stroke="#161462" stroke-width="2.6"/><line x1="721.3" y1="246.0" x2="721.3" y2="283.3" stroke="#161462" stroke-width="2.6"/><line x1="725.6" y1="246.0" x2="725.6" y2="283.3" stroke="#161462" stroke-width="2.6"/><line x1="729.8" y1="246.0" x2="729.8" y2="283.2" stroke="#161462" stroke-width="2.6"/><line x1="734.1" y1="246.0" x2="734.1" y2="283.2" stroke="#161462" stroke-width="2.6"/><line x1="738.4" y1="246.0" x2="738.4" y2="283.1" stroke="#161462" stroke-width="2.6"/><line x1="742.7" y1="246.0" x2="742.7" y2="283.1" stroke="#161462" stroke-width="2.6"/><line x1="746.9" y1="246.0" x2="746.9" y2="283.0" stroke="#161462" stroke-width="2.6"/><line x1="751.2" y1="252.2" x2="751.2" y2="282.0" stroke="#161462" stroke-width="2.6"/><line x1="755.5" y1="262.7" x2="755.5" y2="278.7" stroke="#161462" stroke-width="2.6"/><line x1="759.8" y1="270.6" x2="759.8" y2="275.4" stroke="#161462" stroke-width="2.6"/><line x1="764.1" y1="272.2" x2="764.1" y2="282.1" stroke="#8a2630" stroke-width="1.1"/><line x1="768.3" y1="271.6" x2="768.3" y2="283.5" stroke="#8a2630" stroke-width="1.1"/><line x1="772.6" y1="271.1" x2="772.6" y2="284.9" stroke="#8a2630" stroke-width="1.1"/><line x1="776.9" y1="270.5" x2="776.9" y2="286.4" stroke="#8a2630" stroke-width="1.1"/><line x1="781.2" y1="269.7" x2="781.2" y2="287.0" stroke="#8a2630" stroke-width="1.1"/><line x1="785.4" y1="268.6" x2="785.4" y2="287.0" stroke="#8a2630" stroke-width="1.1"/><line x1="789.7" y1="267.6" x2="789.7" y2="287.0" stroke="#8a2630" stroke-width="1.1"/><line x1="794.0" y1="266.5" x2="794.0" y2="284.3" stroke="#8a2630" stroke-width="1.1"/><line x1="798.3" y1="264.0" x2="798.3" y2="278.5" stroke="#8a2630" stroke-width="1.1"/><line x1="802.5" y1="255.3" x2="802.5" y2="268.7" stroke="#8a2630" stroke-width="1.1"/><line x1="806.8" y1="254.1" x2="806.8" y2="267.4" stroke="#8a2630" stroke-width="1.1"/><line x1="811.1" y1="253.7" x2="811.1" y2="267.2" stroke="#8a2630" stroke-width="1.1"/><line x1="815.4" y1="253.3" x2="815.4" y2="267.1" stroke="#8a2630" stroke-width="1.1"/><line x1="819.7" y1="252.9" x2="819.7" y2="267.0" stroke="#8a2630" stroke-width="1.1"/><line x1="823.9" y1="252.5" x2="823.9" y2="266.8" stroke="#8a2630" stroke-width="1.1"/><line x1="828.2" y1="254.1" x2="828.2" y2="266.7" stroke="#8a2630" stroke-width="1.1"/><line x1="832.5" y1="255.6" x2="832.5" y2="266.5" stroke="#8a2630" stroke-width="1.1"/><line x1="836.8" y1="256.6" x2="836.8" y2="266.2" stroke="#8a2630" stroke-width="1.1"/><line x1="841.0" y1="257.6" x2="841.0" y2="266.0" stroke="#8a2630" stroke-width="1.1"/><line x1="845.3" y1="260.2" x2="845.3" y2="265.7" stroke="#8a2630" stroke-width="1.1"/><line x1="849.6" y1="263.5" x2="849.6" y2="265.4" stroke="#8a2630" stroke-width="1.1"/><line x1="853.9" y1="264.2" x2="853.9" y2="265.2" stroke="#8a2630" stroke-width="1.1"/><line x1="858.1" y1="264.6" x2="858.1" y2="264.9" stroke="#8a2630" stroke-width="1.1"/><line x1="862.4" y1="265.9" x2="862.4" y2="267.2" stroke="#161462" stroke-width="2.6"/><line x1="866.7" y1="269.5" x2="866.7" y2="273.3" stroke="#161462" stroke-width="2.6"/><line x1="871.0" y1="276.7" x2="871.0" y2="283.1" stroke="#161462" stroke-width="2.6"/><line x1="875.3" y1="287.4" x2="875.3" y2="298.8" stroke="#161462" stroke-width="2.6"/><line x1="879.5" y1="293.5" x2="879.5" y2="306.2" stroke="#161462" stroke-width="2.6"/><line x1="883.8" y1="298.1" x2="883.8" y2="309.0" stroke="#161462" stroke-width="2.6"/><line x1="888.1" y1="302.7" x2="888.1" y2="312.5" stroke="#161462" stroke-width="2.6"/><line x1="892.4" y1="308.1" x2="892.4" y2="317.3" stroke="#161462" stroke-width="2.6"/><line x1="896.6" y1="326.0" x2="896.6" y2="336.7" stroke="#161462" stroke-width="2.6"/><line x1="900.9" y1="341.6" x2="900.9" y2="350.5" stroke="#161462" stroke-width="2.6"/><line x1="905.2" y1="341.6" x2="905.2" y2="360.8" stroke="#161462" stroke-width="2.6"/><line x1="909.5" y1="341.6" x2="909.5" y2="366.7" stroke="#161462" stroke-width="2.6"/><line x1="913.7" y1="341.6" x2="913.7" y2="370.8" stroke="#161462" stroke-width="2.6"/><line x1="918.0" y1="341.6" x2="918.0" y2="375.9" stroke="#161462" stroke-width="2.6"/><line x1="922.3" y1="341.6" x2="922.3" y2="377.4" stroke="#161462" stroke-width="2.6"/><line x1="926.6" y1="341.6" x2="926.6" y2="381.0" stroke="#161462" stroke-width="2.6"/><line x1="930.9" y1="341.6" x2="930.9" y2="385.8" stroke="#161462" stroke-width="2.6"/><line x1="935.1" y1="341.6" x2="935.1" y2="390.3" stroke="#161462" stroke-width="2.6"/><line x1="939.4" y1="341.6" x2="939.4" y2="388.7" stroke="#161462" stroke-width="2.6"/><line x1="943.7" y1="341.6" x2="943.7" y2="387.6" stroke="#161462" stroke-width="2.6"/><line x1="948.0" y1="341.6" x2="948.0" y2="387.6" stroke="#161462" stroke-width="2.6"/><line x1="952.2" y1="341.6" x2="952.2" y2="388.6" stroke="#161462" stroke-width="2.6"/><line x1="956.5" y1="341.6" x2="956.5" y2="390.0" stroke="#161462" stroke-width="2.6"/><line x1="960.8" y1="341.6" x2="960.8" y2="390.5" stroke="#161462" stroke-width="2.6"/><line x1="965.1" y1="341.6" x2="965.1" y2="390.6" stroke="#161462" stroke-width="2.6"/><line x1="969.3" y1="341.6" x2="969.3" y2="390.7" stroke="#161462" stroke-width="2.6"/><line x1="973.6" y1="341.6" x2="973.6" y2="390.8" stroke="#161462" stroke-width="2.6"/><line x1="977.9" y1="341.6" x2="977.9" y2="390.9" stroke="#161462" stroke-width="2.6"/><line x1="982.2" y1="341.6" x2="982.2" y2="391.0" stroke="#161462" stroke-width="2.6"/><path d="M0.0,151.0 L7.5,141.0 L15.0,126.4 L28.0,124.0 L30.0,123.0 L37.5,110.0 L45.0,103.0 L76.9,102.0 L87.0,104.3 L102.0,105.5 L105.5,103.2 L111.0,102.0 L122.6,103.8 L131.8,102.0 L138.7,98.0 L144.4,96.3 L147.8,91.2 L155.8,86.0 L161.5,84.9 L167.3,88.9 L173.0,91.7 L186.0,94.6" fill="none" stroke="#9a2228" stroke-width="1"/><path d="M372.0,95.0 L382.0,90.0 L390.0,86.3 L398.0,90.0 L408.0,95.0" fill="none" stroke="#9a2228" stroke-width="1"/><path d="M528.0,166.0 L530.3,168.8 L538.8,181.0 L542.5,188.8 L548.0,190.6 L557.5,203.8 L565.0,211.3 L570.7,230.0 L576.3,243.0 L582.0,252.5 L587.5,258.0 L598.8,263.8 L606.3,267.5 L612.0,264.7 L625.0,262.8 L636.3,263.8 L643.8,269.4 L651.3,275.0 L670.0,277.8 L679.4,280.6 L685.0,276.9 L696.3,278.8 L705.6,283.4 L712.0,283.4 L750.0,283.0 L763.8,272.2 L778.8,270.3 L797.5,265.6 L803.0,254.4 L823.8,252.5 L831.3,255.3 L842.5,258.0 L850.0,263.8 L859.4,264.7 L865.0,269.4 L874.0,290.0 L876.0,304.0 L886.4,310.6 L893.0,318.0 L896.7,337.0 L901.4,352.0 L907.0,365.0 L912.6,368.8 L916.4,375.3 L924.0,378.0 L928.0,382.6 L935.0,390.4 L942.2,387.6 L949.2,387.6 L957.7,390.4 L983.0,391.0" fill="none" stroke="#9a2228" stroke-width="1"/><path d="M0.0,168.0 L12.0,151.0 L14.0,140.0 L78.7,140.0 L120.0,139.7 L122.0,131.0 L150.0,131.0 L186.0,131.0" fill="none" stroke="#17157c" stroke-width="1"/><path d="M372.0,130.0 L408.0,130.0" fill="none" stroke="#17157c" stroke-width="1"/><path d="M528.0,126.0 L530.3,127.5 L537.0,130.3 L542.5,140.6 L548.0,144.4 L555.6,150.0 L565.0,161.0 L570.7,170.0 L572.5,186.0 L595.0,186.0 L602.5,192.5 L610.0,196.3 L613.8,215.0 L688.8,217.0 L692.6,220.6 L700.0,233.8 L716.0,233.8 L717.0,246.0 L749.0,246.0 L754.0,260.0 L760.0,271.0 L763.8,282.0 L778.8,287.0 L792.0,287.0 L799.4,277.0 L803.0,267.5 L831.0,266.6 L861.0,264.7 L868.8,271.3 L876.3,290.0 L892.0,306.9 L894.8,316.0 L899.5,341.6 L983.0,341.6" fill="none" stroke="#17157c" stroke-width="1"/><path d="M0.0,153.0 L9.4,132.5 L15.0,141.0 L19.7,135.3 L25.3,143.7 L30.0,138.0 L33.7,133.4 L37.5,135.3 L42.0,125.0 L47.0,115.6 L50.0,110.0 L54.4,105.6 L63.7,106.5 L67.5,101.9 L71.2,103.7 L80.0,112.0 L95.0,120.0 L110.0,128.0 L121.5,125.0 L131.8,92.9 L135.2,75.7 L140.0,60.0 L160.0,60.0 L166.0,75.7 L168.4,91.7 L171.8,117.0 L178.0,110.0 L186.0,100.0" fill="none" stroke="#285a2b" stroke-width="0.95"/><path d="M265.0,150.0 L271.6,166.0 L277.3,206.3 L281.0,185.6 L284.8,202.5 L289.4,185.6 L294.0,194.0 L302.6,173.4 L309.0,195.0 L314.8,210.0 L317.2,230.0 L321.0,239.4 L324.7,241.0 L333.0,261.0 L337.9,257.0 L341.0,270.0 L344.4,284.4 L353.8,308.8 L359.4,284.4 L363.0,285.0 L367.0,291.0 L369.8,283.4 L376.0,270.0 L388.6,282.5 L392.4,295.6 L395.2,282.5 L402.0,270.0 L448.7,282.5 L451.5,294.7 L456.0,288.0 L461.8,283.4 L488.0,288.0 L499.0,288.0 L512.0,288.8 L522.0,282.5 L530.8,280.0 L560.0,272.0 L572.5,260.0 L580.0,225.3 L585.7,237.5 L597.0,238.5 L603.5,260.0 L606.3,275.0 L612.0,273.0 L614.7,277.0 L640.0,282.5 L642.8,293.8 L647.5,307.0 L651.3,320.0 L654.4,348.8 L657.2,359.0 L662.0,347.8 L667.5,365.6 L671.3,386.3 L674.7,444.4 L679.4,399.4 L683.1,404.0 L688.8,396.6 L694.4,401.3 L700.0,415.4 L704.7,427.6 L714.0,402.3 L722.5,408.8 L731.0,423.8 L743.0,411.6 L754.4,438.8 L761.0,407.9 L773.1,435.0 L782.5,407.0 L790.6,380.6 L796.3,395.6 L805.6,418.0 L811.3,410.6 L818.8,397.5 L828.0,392.8 L835.6,390.0 L845.0,371.3 L848.8,378.8 L852.5,394.2 L858.3,399.6 L863.3,397.5 L867.5,411.6 L871.6,400.8 L880.8,395.0 L887.4,411.6 L890.8,422.4 L896.6,425.0 L904.0,417.5 L910.0,413.3 L915.0,416.6 L920.7,417.5 L926.5,412.5 L933.2,405.8 L940.0,398.0 L950.0,392.0 L960.0,388.0 L970.0,392.0 L983.0,395.0" fill="none" stroke="#285a2b" stroke-width="0.95"/><line x1="0" y1="394.3" x2="983" y2="394.3" stroke="#2a6b66" stroke-width="1"/><path d="M0.0,96.6 L33.8,96.0 L56.0,91.0 L71.0,93.0 L78.8,95.6 L101.0,106.9 L144.4,107.8 L150.0,125.6 L159.4,128.4 L186.0,130.3" fill="none" stroke="#1c1ca4" stroke-width="3" stroke-linejoin="round"/><path d="M530.3,256.0 L534.0,270.0 L538.8,278.8 L546.3,283.4 L557.5,287.2 L563.0,287.2 L568.8,282.5 L576.3,279.7 L585.6,277.8 L604.4,277.8 L632.5,276.0 L651.3,275.0 L683.1,275.0 L688.8,260.0 L700.0,259.0 L754.4,260.0 L760.0,271.0 L763.8,291.0 L771.3,295.0 L780.6,304.4 L784.4,327.0 L788.0,340.0 L797.5,343.8 L807.0,348.4 L818.0,352.2 L824.0,360.0 L831.3,364.4 L837.5,366.6 L856.3,368.4 L863.8,376.9 L869.4,386.3 L875.0,394.7 L882.5,402.2 L890.0,412.5 L897.5,424.0 L902.6,410.2 L928.0,410.9 L950.7,410.2 L956.3,405.2 L983.0,405.2" fill="none" stroke="#1c1ca4" stroke-width="3" stroke-linejoin="round"/><path d="M0.0,109.0 L7.0,109.0 L15.0,113.5 L25.0,106.0 L35.6,94.0 L42.0,84.0 L48.8,78.0 L55.0,81.0 L60.0,88.0 L71.0,94.0 L76.0,101.0 L82.5,118.0 L94.0,125.6 L105.0,129.4 L112.5,135.0 L120.0,142.5 L131.0,143.4 L148.0,142.5 L159.0,126.6 L165.0,124.7 L176.0,121.9 L186.0,117.0" fill="none" stroke="#f02424" stroke-width="2" stroke-linejoin="round"/><path d="M470.0,275.0 L484.3,292.0 L491.8,293.8 L497.5,289.0 L503.0,283.4 L515.0,279.0 L530.3,279.7 L537.8,276.0 L544.4,265.6 L557.5,264.7 L563.1,273.0 L572.5,274.0 L583.8,282.5 L591.3,288.1 L613.8,289.0 L621.3,282.5 L640.0,283.4 L649.4,276.0 L655.0,268.4 L662.5,267.5 L670.0,264.7 L679.4,260.0 L688.8,258.0 L692.5,249.7 L703.8,247.8 L709.4,247.8 L716.9,250.6 L720.6,256.3 L730.0,257.2 L737.5,265.6 L745.0,268.4 L750.6,271.3 L756.3,282.5 L760.0,295.0 L764.7,308.0 L769.4,317.5 L780.6,328.8 L784.4,351.3 L788.8,369.4 L794.4,386.3 L800.0,390.0 L804.7,398.4 L809.4,405.0 L816.0,413.4 L823.4,426.6 L828.0,416.3 L833.7,408.8 L841.3,413.4 L860.0,412.5 L867.5,423.8 L890.0,424.7 L897.5,418.0 L904.0,410.2 L916.7,410.2 L922.4,405.2 L928.0,402.4 L947.8,401.7 L955.0,397.5 L960.6,391.8 L964.8,386.1 L973.3,384.7 L977.5,386.9 L983.0,390.4" fill="none" stroke="#f02424" stroke-width="2" stroke-linejoin="round"/><line x1="2.8" y1="108.0" x2="2.8" y2="123.7" stroke="#4cae9e" stroke-width="0.85" stroke-opacity="0.85"/><rect x="1.3" y="111.6" width="3" height="9.4" fill="#4cae9e"/><line x1="7.1" y1="96.0" x2="7.1" y2="116.0" stroke="#4cae9e" stroke-width="0.85" stroke-opacity="0.85"/><rect x="5.6" y="98.4" width="3" height="14.1" fill="#4cae9e"/><line x1="11.6" y1="95.0" x2="11.6" y2="104.0" stroke="#e66a60" stroke-width="0.85" stroke-opacity="0.85"/><rect x="10.1" y="97.5" width="3" height="3.5" fill="#e66a60"/><line x1="15.9" y1="96.0" x2="15.9" y2="105.0" stroke="#e66a60" stroke-width="0.85" stroke-opacity="0.85"/><rect x="14.4" y="99.6" width="3" height="2.8" fill="#e66a60"/><line x1="19.7" y1="86.0" x2="19.7" y2="105.0" stroke="#4cae9e" stroke-width="0.85" stroke-opacity="0.85"/><rect x="18.2" y="90.0" width="3" height="11.5" fill="#4cae9e"/><line x1="24.0" y1="66.0" x2="24.0" y2="95.0" stroke="#4cae9e" stroke-width="0.85" stroke-opacity="0.85"/><rect x="22.5" y="88.4" width="3" height="4.6" fill="#4cae9e"/><line x1="28.5" y1="76.0" x2="28.5" y2="92.0" stroke="#4cae9e" stroke-width="0.85" stroke-opacity="0.85"/><rect x="27.0" y="79.0" width="3" height="9.4" fill="#4cae9e"/><line x1="32.8" y1="61.0" x2="32.8" y2="83.0" stroke="#4cae9e" stroke-width="0.85" stroke-opacity="0.85"/><rect x="31.3" y="62.0" width="3" height="19.0" fill="#4cae9e"/><line x1="37.5" y1="51.8" x2="37.5" y2="96.0" stroke="#e66a60" stroke-width="0.85" stroke-opacity="0.85"/><rect x="36.0" y="63.0" width="3" height="31.0" fill="#e66a60"/><line x1="41.6" y1="90.0" x2="41.6" y2="101.0" stroke="#e66a60" stroke-width="0.85" stroke-opacity="0.85"/><rect x="40.1" y="94.0" width="3" height="4.7" fill="#e66a60"/><line x1="45.6" y1="92.0" x2="45.6" y2="101.0" stroke="#4cae9e" stroke-width="0.85" stroke-opacity="0.85"/><rect x="44.1" y="95.0" width="3" height="3.7" fill="#4cae9e"/><line x1="49.7" y1="88.0" x2="49.7" y2="100.0" stroke="#4cae9e" stroke-width="0.85" stroke-opacity="0.85"/><rect x="48.2" y="90.0" width="3" height="7.7" fill="#4cae9e"/><line x1="54.4" y1="93.0" x2="54.4" y2="106.0" stroke="#e66a60" stroke-width="0.85" stroke-opacity="0.85"/><rect x="52.9" y="95.6" width="3" height="8.4" fill="#e66a60"/><line x1="58.5" y1="100.0" x2="58.5" y2="126.5" stroke="#e66a60" stroke-width="0.85" stroke-opacity="0.85"/><rect x="57.0" y="103.0" width="3" height="19.8" fill="#e66a60"/><line x1="62.8" y1="114.0" x2="62.8" y2="125.0" stroke="#4cae9e" stroke-width="0.85" stroke-opacity="0.85"/><rect x="61.3" y="117.0" width="3" height="5.8" fill="#4cae9e"/><line x1="67.0" y1="113.0" x2="67.0" y2="134.0" stroke="#e66a60" stroke-width="0.85" stroke-opacity="0.85"/><rect x="65.5" y="116.0" width="3" height="13.4" fill="#e66a60"/><line x1="71.3" y1="95.6" x2="71.3" y2="135.0" stroke="#4cae9e" stroke-width="0.85" stroke-opacity="0.85"/><rect x="69.8" y="101.0" width="3" height="30.0" fill="#4cae9e"/><line x1="75.4" y1="98.0" x2="75.4" y2="114.0" stroke="#e66a60" stroke-width="0.85" stroke-opacity="0.85"/><rect x="73.9" y="100.0" width="3" height="11.6" fill="#e66a60"/><line x1="79.7" y1="108.0" x2="79.7" y2="130.0" stroke="#e66a60" stroke-width="0.85" stroke-opacity="0.85"/><rect x="78.2" y="111.6" width="3" height="15.9" fill="#e66a60"/><line x1="84.0" y1="126.0" x2="84.0" y2="149.0" stroke="#e66a60" stroke-width="0.85" stroke-opacity="0.85"/><rect x="82.5" y="129.4" width="3" height="17.8" fill="#e66a60"/><line x1="88.1" y1="133.0" x2="88.1" y2="153.7" stroke="#4cae9e" stroke-width="0.85" stroke-opacity="0.85"/><rect x="86.6" y="136.0" width="3" height="12.0" fill="#4cae9e"/><line x1="92.4" y1="125.0" x2="92.4" y2="140.0" stroke="#4cae9e" stroke-width="0.85" stroke-opacity="0.85"/><rect x="90.9" y="128.4" width="3" height="8.5" fill="#4cae9e"/><line x1="96.9" y1="127.0" x2="96.9" y2="136.0" stroke="#e66a60" stroke-width="0.85" stroke-opacity="0.85"/><rect x="95.4" y="130.0" width="3" height="3.0" fill="#e66a60"/><line x1="101.3" y1="122.8" x2="101.3" y2="162.0" stroke="#e66a60" stroke-width="0.85" stroke-opacity="0.85"/><rect x="99.8" y="132.0" width="3" height="28.0" fill="#e66a60"/><line x1="105.6" y1="149.0" x2="105.6" y2="162.0" stroke="#4cae9e" stroke-width="0.85" stroke-opacity="0.85"/><rect x="104.1" y="152.8" width="3" height="2.8" fill="#4cae9e"/><line x1="109.9" y1="147.0" x2="109.9" y2="157.0" stroke="#4cae9e" stroke-width="0.85" stroke-opacity="0.85"/><rect x="108.4" y="150.0" width="3" height="3.7" fill="#4cae9e"/><line x1="114.0" y1="148.0" x2="114.0" y2="163.0" stroke="#e66a60" stroke-width="0.85" stroke-opacity="0.85"/><rect x="112.5" y="151.0" width="3" height="2.7" fill="#e66a60"/><line x1="118.5" y1="133.0" x2="118.5" y2="161.0" stroke="#4cae9e" stroke-width="0.85" stroke-opacity="0.85"/><rect x="117.0" y="136.0" width="3" height="17.7" fill="#4cae9e"/><line x1="122.8" y1="127.0" x2="122.8" y2="140.0" stroke="#4cae9e" stroke-width="0.85" stroke-opacity="0.85"/><rect x="121.3" y="130.0" width="3" height="7.0" fill="#4cae9e"/><line x1="127.1" y1="127.0" x2="127.1" y2="149.0" stroke="#e66a60" stroke-width="0.85" stroke-opacity="0.85"/><rect x="125.6" y="130.0" width="3" height="12.5" fill="#e66a60"/><line x1="131.3" y1="123.8" x2="131.3" y2="145.0" stroke="#4cae9e" stroke-width="0.85" stroke-opacity="0.85"/><rect x="129.8" y="134.0" width="3" height="8.5" fill="#4cae9e"/><line x1="135.4" y1="137.0" x2="135.4" y2="146.0" stroke="#e66a60" stroke-width="0.85" stroke-opacity="0.85"/><rect x="133.9" y="139.7" width="3" height="3.7" fill="#e66a60"/><line x1="139.7" y1="133.0" x2="139.7" y2="145.0" stroke="#4cae9e" stroke-width="0.85" stroke-opacity="0.85"/><rect x="138.2" y="136.0" width="3" height="6.5" fill="#4cae9e"/><line x1="144.0" y1="125.6" x2="144.0" y2="140.0" stroke="#4cae9e" stroke-width="0.85" stroke-opacity="0.85"/><rect x="142.5" y="132.0" width="3" height="5.0" fill="#4cae9e"/><line x1="148.1" y1="129.0" x2="148.1" y2="139.0" stroke="#e66a60" stroke-width="0.85" stroke-opacity="0.85"/><rect x="146.6" y="132.0" width="3" height="4.0" fill="#e66a60"/><line x1="152.8" y1="117.0" x2="152.8" y2="139.0" stroke="#4cae9e" stroke-width="0.85" stroke-opacity="0.85"/><rect x="151.3" y="121.0" width="3" height="15.0" fill="#4cae9e"/><line x1="157.1" y1="113.0" x2="157.1" y2="125.0" stroke="#4cae9e" stroke-width="0.85" stroke-opacity="0.85"/><rect x="155.6" y="116.0" width="3" height="6.0" fill="#4cae9e"/><line x1="161.3" y1="101.0" x2="161.3" y2="119.0" stroke="#4cae9e" stroke-width="0.85" stroke-opacity="0.85"/><rect x="159.8" y="104.0" width="3" height="12.0" fill="#4cae9e"/><line x1="165.4" y1="97.5" x2="165.4" y2="112.0" stroke="#e66a60" stroke-width="0.85" stroke-opacity="0.85"/><rect x="163.9" y="107.0" width="3" height="2.0" fill="#e66a60"/><line x1="169.7" y1="103.0" x2="169.7" y2="112.0" stroke="#e66a60" stroke-width="0.85" stroke-opacity="0.85"/><rect x="168.2" y="106.5" width="3" height="2.0" fill="#e66a60"/><line x1="174.0" y1="104.0" x2="174.0" y2="113.0" stroke="#e66a60" stroke-width="0.85" stroke-opacity="0.85"/><rect x="172.5" y="107.0" width="3" height="3.6" fill="#e66a60"/><line x1="178.1" y1="97.0" x2="178.1" y2="113.0" stroke="#4cae9e" stroke-width="0.85" stroke-opacity="0.85"/><rect x="176.6" y="100.0" width="3" height="10.6" fill="#4cae9e"/><line x1="182.3" y1="97.0" x2="182.3" y2="113.0" stroke="#e66a60" stroke-width="0.85" stroke-opacity="0.85"/><rect x="180.8" y="100.0" width="3" height="10.6" fill="#e66a60"/><line x1="311.0" y1="160.0" x2="311.0" y2="186.6" stroke="#e66a60" stroke-width="0.85" stroke-opacity="0.85"/><rect x="309.5" y="160.0" width="3" height="2.0" fill="#e66a60"/><line x1="456.2" y1="270.0" x2="456.2" y2="298.5" stroke="#e66a60" stroke-width="0.85" stroke-opacity="0.85"/><rect x="454.7" y="270.0" width="3" height="21.0" fill="#e66a60"/><line x1="460.5" y1="270.0" x2="460.5" y2="334.0" stroke="#e66a60" stroke-width="0.85" stroke-opacity="0.85"/><rect x="459.0" y="275.0" width="3" height="29.0" fill="#e66a60"/><line x1="465.0" y1="300.0" x2="465.0" y2="315.0" stroke="#e66a60" stroke-width="0.85" stroke-opacity="0.85"/><rect x="463.5" y="307.0" width="3" height="3.0" fill="#e66a60"/><line x1="469.3" y1="270.0" x2="469.3" y2="312.0" stroke="#4cae9e" stroke-width="0.85" stroke-opacity="0.85"/><rect x="467.8" y="285.0" width="3" height="25.0" fill="#4cae9e"/><line x1="473.6" y1="270.0" x2="473.6" y2="304.0" stroke="#4cae9e" stroke-width="0.85" stroke-opacity="0.85"/><rect x="472.1" y="275.0" width="3" height="11.0" fill="#4cae9e"/><line x1="478.0" y1="270.0" x2="478.0" y2="297.5" stroke="#e66a60" stroke-width="0.85" stroke-opacity="0.85"/><rect x="476.5" y="270.0" width="3" height="22.0" fill="#e66a60"/><line x1="482.0" y1="270.0" x2="482.0" y2="298.0" stroke="#4cae9e" stroke-width="0.85" stroke-opacity="0.85"/><rect x="480.5" y="282.5" width="3" height="13.1" fill="#4cae9e"/><line x1="503.5" y1="270.0" x2="503.5" y2="312.5" stroke="#e66a60" stroke-width="0.85" stroke-opacity="0.85"/><rect x="502.0" y="270.0" width="3" height="25.6" fill="#e66a60"/><line x1="507.8" y1="270.0" x2="507.8" y2="297.0" stroke="#4cae9e" stroke-width="0.85" stroke-opacity="0.85"/><rect x="506.3" y="270.0" width="3" height="24.7" fill="#4cae9e"/><line x1="533.5" y1="258.0" x2="533.5" y2="275.0" stroke="#4cae9e" stroke-width="0.85" stroke-opacity="0.85"/><rect x="532.0" y="263.8" width="3" height="8.4" fill="#4cae9e"/><line x1="537.8" y1="243.0" x2="537.8" y2="277.0" stroke="#4cae9e" stroke-width="0.85" stroke-opacity="0.85"/><rect x="536.3" y="254.4" width="3" height="11.2" fill="#4cae9e"/><line x1="542.1" y1="244.0" x2="542.1" y2="277.0" stroke="#e66a60" stroke-width="0.85" stroke-opacity="0.85"/><rect x="540.6" y="255.3" width="3" height="2.7" fill="#e66a60"/><line x1="546.6" y1="248.8" x2="546.6" y2="276.0" stroke="#4cae9e" stroke-width="0.85" stroke-opacity="0.85"/><rect x="545.1" y="253.4" width="3" height="3.8" fill="#4cae9e"/><line x1="550.6" y1="251.0" x2="550.6" y2="276.0" stroke="#e66a60" stroke-width="0.85" stroke-opacity="0.85"/><rect x="549.1" y="253.4" width="3" height="17.9" fill="#e66a60"/><line x1="555.0" y1="267.0" x2="555.0" y2="275.0" stroke="#e66a60" stroke-width="0.85" stroke-opacity="0.85"/><rect x="553.5" y="269.4" width="3" height="2.8" fill="#e66a60"/><line x1="559.4" y1="270.0" x2="559.4" y2="285.0" stroke="#e66a60" stroke-width="0.85" stroke-opacity="0.85"/><rect x="557.9" y="272.2" width="3" height="10.3" fill="#e66a60"/><line x1="563.7" y1="275.0" x2="563.7" y2="304.0" stroke="#e66a60" stroke-width="0.85" stroke-opacity="0.85"/><rect x="562.2" y="282.5" width="3" height="15.0" fill="#e66a60"/><line x1="568.2" y1="284.0" x2="568.2" y2="303.0" stroke="#4cae9e" stroke-width="0.85" stroke-opacity="0.85"/><rect x="566.7" y="286.3" width="3" height="12.1" fill="#4cae9e"/><line x1="572.5" y1="270.3" x2="572.5" y2="301.0" stroke="#e66a60" stroke-width="0.85" stroke-opacity="0.85"/><rect x="571.0" y="286.3" width="3" height="12.1" fill="#e66a60"/><line x1="576.6" y1="276.9" x2="576.6" y2="308.8" stroke="#e66a60" stroke-width="0.85" stroke-opacity="0.85"/><rect x="575.1" y="299.4" width="3" height="1.9" fill="#e66a60"/><line x1="580.8" y1="277.8" x2="580.8" y2="305.0" stroke="#4cae9e" stroke-width="0.85" stroke-opacity="0.85"/><rect x="579.3" y="286.3" width="3" height="15.9" fill="#4cae9e"/><line x1="585.0" y1="278.8" x2="585.0" y2="288.0" stroke="#e66a60" stroke-width="0.85" stroke-opacity="0.85"/><rect x="583.5" y="283.4" width="3" height="1.9" fill="#e66a60"/><line x1="589.4" y1="282.0" x2="589.4" y2="289.0" stroke="#e66a60" stroke-width="0.85" stroke-opacity="0.85"/><rect x="587.9" y="284.4" width="3" height="1.9" fill="#e66a60"/><line x1="593.7" y1="269.4" x2="593.7" y2="288.0" stroke="#e66a60" stroke-width="0.85" stroke-opacity="0.85"/><rect x="592.2" y="283.4" width="3" height="2.9" fill="#e66a60"/><line x1="597.8" y1="282.0" x2="597.8" y2="295.6" stroke="#e66a60" stroke-width="0.85" stroke-opacity="0.85"/><rect x="596.3" y="284.4" width="3" height="4.6" fill="#e66a60"/><line x1="602.1" y1="285.0" x2="602.1" y2="296.6" stroke="#e66a60" stroke-width="0.85" stroke-opacity="0.85"/><rect x="600.6" y="287.2" width="3" height="2.8" fill="#e66a60"/><line x1="606.3" y1="282.5" x2="606.3" y2="292.0" stroke="#4cae9e" stroke-width="0.85" stroke-opacity="0.85"/><rect x="604.8" y="286.3" width="3" height="3.7" fill="#4cae9e"/><line x1="610.6" y1="275.0" x2="610.6" y2="294.7" stroke="#e66a60" stroke-width="0.85" stroke-opacity="0.85"/><rect x="609.1" y="287.2" width="3" height="2.8" fill="#e66a60"/><line x1="615.0" y1="286.0" x2="615.0" y2="292.0" stroke="#e66a60" stroke-width="0.85" stroke-opacity="0.85"/><rect x="613.5" y="288.0" width="3" height="2.0" fill="#e66a60"/><line x1="619.4" y1="286.0" x2="619.4" y2="292.0" stroke="#4cae9e" stroke-width="0.85" stroke-opacity="0.85"/><rect x="617.9" y="288.0" width="3" height="2.0" fill="#4cae9e"/><line x1="623.5" y1="270.3" x2="623.5" y2="294.7" stroke="#e66a60" stroke-width="0.85" stroke-opacity="0.85"/><rect x="622.0" y="283.4" width="3" height="6.6" fill="#e66a60"/><line x1="627.8" y1="277.8" x2="627.8" y2="295.0" stroke="#4cae9e" stroke-width="0.85" stroke-opacity="0.85"/><rect x="626.3" y="284.4" width="3" height="8.4" fill="#4cae9e"/><line x1="632.0" y1="277.8" x2="632.0" y2="293.0" stroke="#e66a60" stroke-width="0.85" stroke-opacity="0.85"/><rect x="630.5" y="284.4" width="3" height="5.6" fill="#e66a60"/><line x1="636.3" y1="281.0" x2="636.3" y2="290.0" stroke="#4cae9e" stroke-width="0.85" stroke-opacity="0.85"/><rect x="634.8" y="283.4" width="3" height="4.7" fill="#4cae9e"/><line x1="640.6" y1="266.6" x2="640.6" y2="286.0" stroke="#4cae9e" stroke-width="0.85" stroke-opacity="0.85"/><rect x="639.1" y="272.2" width="3" height="11.2" fill="#4cae9e"/><line x1="645.0" y1="267.0" x2="645.0" y2="275.0" stroke="#4cae9e" stroke-width="0.85" stroke-opacity="0.85"/><rect x="643.5" y="269.4" width="3" height="2.8" fill="#4cae9e"/><line x1="649.0" y1="261.0" x2="649.0" y2="272.0" stroke="#4cae9e" stroke-width="0.85" stroke-opacity="0.85"/><rect x="647.5" y="264.7" width="3" height="4.7" fill="#4cae9e"/><line x1="653.5" y1="242.2" x2="653.5" y2="267.0" stroke="#4cae9e" stroke-width="0.85" stroke-opacity="0.85"/><rect x="652.0" y="246.0" width="3" height="18.7" fill="#4cae9e"/><line x1="657.8" y1="243.0" x2="657.8" y2="254.0" stroke="#e66a60" stroke-width="0.85" stroke-opacity="0.85"/><rect x="656.3" y="246.0" width="3" height="5.6" fill="#e66a60"/><line x1="662.1" y1="248.0" x2="662.1" y2="267.0" stroke="#e66a60" stroke-width="0.85" stroke-opacity="0.85"/><rect x="660.6" y="250.6" width="3" height="14.1" fill="#e66a60"/><line x1="666.3" y1="261.0" x2="666.3" y2="278.0" stroke="#4cae9e" stroke-width="0.85" stroke-opacity="0.85"/><rect x="664.8" y="263.8" width="3" height="11.2" fill="#4cae9e"/><line x1="670.6" y1="260.0" x2="670.6" y2="276.0" stroke="#e66a60" stroke-width="0.85" stroke-opacity="0.85"/><rect x="669.1" y="264.7" width="3" height="5.6" fill="#e66a60"/><line x1="674.9" y1="267.0" x2="674.9" y2="272.0" stroke="#e66a60" stroke-width="0.85" stroke-opacity="0.85"/><rect x="673.4" y="269.4" width="3" height="1.2" fill="#e66a60"/><line x1="679.2" y1="265.0" x2="679.2" y2="272.0" stroke="#4cae9e" stroke-width="0.85" stroke-opacity="0.85"/><rect x="677.7" y="267.5" width="3" height="2.8" fill="#4cae9e"/><line x1="683.5" y1="258.0" x2="683.5" y2="273.0" stroke="#4cae9e" stroke-width="0.85" stroke-opacity="0.85"/><rect x="682.0" y="266.6" width="3" height="3.7" fill="#4cae9e"/><line x1="687.8" y1="243.0" x2="687.8" y2="268.0" stroke="#4cae9e" stroke-width="0.85" stroke-opacity="0.85"/><rect x="686.3" y="246.0" width="3" height="19.6" fill="#4cae9e"/><line x1="692.1" y1="221.6" x2="692.1" y2="248.0" stroke="#4cae9e" stroke-width="0.85" stroke-opacity="0.85"/><rect x="690.6" y="223.5" width="3" height="22.5" fill="#4cae9e"/><line x1="696.4" y1="222.0" x2="696.4" y2="241.0" stroke="#e66a60" stroke-width="0.85" stroke-opacity="0.85"/><rect x="694.9" y="224.4" width="3" height="14.1" fill="#e66a60"/><line x1="700.7" y1="234.7" x2="700.7" y2="245.0" stroke="#e66a60" stroke-width="0.85" stroke-opacity="0.85"/><rect x="699.2" y="236.6" width="3" height="2.8" fill="#e66a60"/><line x1="704.8" y1="235.0" x2="704.8" y2="243.0" stroke="#e66a60" stroke-width="0.85" stroke-opacity="0.85"/><rect x="703.3" y="237.5" width="3" height="2.8" fill="#e66a60"/><line x1="709.5" y1="235.0" x2="709.5" y2="243.0" stroke="#4cae9e" stroke-width="0.85" stroke-opacity="0.85"/><rect x="708.0" y="237.5" width="3" height="2.8" fill="#4cae9e"/><line x1="713.5" y1="235.0" x2="713.5" y2="261.0" stroke="#e66a60" stroke-width="0.85" stroke-opacity="0.85"/><rect x="712.0" y="237.5" width="3" height="16.9" fill="#e66a60"/><line x1="717.8" y1="252.0" x2="717.8" y2="280.0" stroke="#e66a60" stroke-width="0.85" stroke-opacity="0.85"/><rect x="716.3" y="254.4" width="3" height="22.6" fill="#e66a60"/><line x1="722.0" y1="268.0" x2="722.0" y2="290.0" stroke="#4cae9e" stroke-width="0.85" stroke-opacity="0.85"/><rect x="720.5" y="271.0" width="3" height="6.0" fill="#4cae9e"/><line x1="726.3" y1="269.0" x2="726.3" y2="283.0" stroke="#e66a60" stroke-width="0.85" stroke-opacity="0.85"/><rect x="724.8" y="271.3" width="3" height="8.4" fill="#e66a60"/><line x1="730.6" y1="265.6" x2="730.6" y2="282.5" stroke="#4cae9e" stroke-width="0.85" stroke-opacity="0.85"/><rect x="729.1" y="276.9" width="3" height="1.9" fill="#4cae9e"/><line x1="734.7" y1="273.0" x2="734.7" y2="280.0" stroke="#e66a60" stroke-width="0.85" stroke-opacity="0.85"/><rect x="733.2" y="275.0" width="3" height="2.8" fill="#e66a60"/><line x1="739.0" y1="275.0" x2="739.0" y2="298.0" stroke="#e66a60" stroke-width="0.85" stroke-opacity="0.85"/><rect x="737.5" y="277.8" width="3" height="18.2" fill="#e66a60"/><line x1="743.5" y1="280.6" x2="743.5" y2="298.0" stroke="#4cae9e" stroke-width="0.85" stroke-opacity="0.85"/><rect x="742.0" y="285.6" width="3" height="10.4" fill="#4cae9e"/><line x1="747.8" y1="276.0" x2="747.8" y2="289.0" stroke="#4cae9e" stroke-width="0.85" stroke-opacity="0.85"/><rect x="746.3" y="278.8" width="3" height="7.5" fill="#4cae9e"/><line x1="752.0" y1="269.4" x2="752.0" y2="281.0" stroke="#e66a60" stroke-width="0.85" stroke-opacity="0.85"/><rect x="750.5" y="276.0" width="3" height="2.8" fill="#e66a60"/><line x1="756.3" y1="275.0" x2="756.3" y2="315.6" stroke="#e66a60" stroke-width="0.85" stroke-opacity="0.85"/><rect x="754.8" y="277.0" width="3" height="33.0" fill="#e66a60"/><line x1="760.4" y1="306.0" x2="760.4" y2="330.6" stroke="#e66a60" stroke-width="0.85" stroke-opacity="0.85"/><rect x="758.9" y="306.0" width="3" height="2.0" fill="#e66a60"/><line x1="764.7" y1="310.0" x2="764.7" y2="364.7" stroke="#e66a60" stroke-width="0.85" stroke-opacity="0.85"/><rect x="763.2" y="312.0" width="3" height="35.8" fill="#e66a60"/><line x1="768.8" y1="341.0" x2="768.8" y2="362.0" stroke="#e66a60" stroke-width="0.85" stroke-opacity="0.85"/><rect x="767.3" y="347.8" width="3" height="12.2" fill="#e66a60"/><line x1="772.9" y1="341.0" x2="772.9" y2="372.0" stroke="#4cae9e" stroke-width="0.85" stroke-opacity="0.85"/><rect x="771.4" y="347.0" width="3" height="13.0" fill="#4cae9e"/><line x1="777.2" y1="342.0" x2="777.2" y2="382.5" stroke="#e66a60" stroke-width="0.85" stroke-opacity="0.85"/><rect x="775.7" y="346.0" width="3" height="15.0" fill="#e66a60"/><line x1="781.5" y1="357.0" x2="781.5" y2="387.0" stroke="#e66a60" stroke-width="0.85" stroke-opacity="0.85"/><rect x="780.0" y="361.0" width="3" height="23.4" fill="#e66a60"/><line x1="785.9" y1="378.0" x2="785.9" y2="451.0" stroke="#e66a60" stroke-width="0.85" stroke-opacity="0.85"/><rect x="784.4" y="383.4" width="3" height="62.0" fill="#e66a60"/><line x1="790.0" y1="380.0" x2="790.0" y2="466.0" stroke="#4cae9e" stroke-width="0.85" stroke-opacity="0.85"/><rect x="788.5" y="398.5" width="3" height="46.9" fill="#4cae9e"/><line x1="794.4" y1="390.0" x2="794.4" y2="417.0" stroke="#e66a60" stroke-width="0.85" stroke-opacity="0.85"/><rect x="792.9" y="392.8" width="3" height="12.2" fill="#e66a60"/><line x1="798.7" y1="392.0" x2="798.7" y2="409.0" stroke="#4cae9e" stroke-width="0.85" stroke-opacity="0.85"/><rect x="797.2" y="396.6" width="3" height="8.4" fill="#4cae9e"/><line x1="803.0" y1="386.0" x2="803.0" y2="410.6" stroke="#e66a60" stroke-width="0.85" stroke-opacity="0.85"/><rect x="801.5" y="395.6" width="3" height="5.4" fill="#e66a60"/><line x1="807.5" y1="395.0" x2="807.5" y2="412.0" stroke="#e66a60" stroke-width="0.85" stroke-opacity="0.85"/><rect x="806.0" y="397.5" width="3" height="12.2" fill="#e66a60"/><line x1="811.8" y1="405.0" x2="811.8" y2="427.5" stroke="#e66a60" stroke-width="0.85" stroke-opacity="0.85"/><rect x="810.3" y="408.8" width="3" height="5.6" fill="#e66a60"/><line x1="816.0" y1="412.0" x2="816.0" y2="432.0" stroke="#e66a60" stroke-width="0.85" stroke-opacity="0.85"/><rect x="814.5" y="414.4" width="3" height="13.1" fill="#e66a60"/><line x1="820.2" y1="405.0" x2="820.2" y2="430.0" stroke="#4cae9e" stroke-width="0.85" stroke-opacity="0.85"/><rect x="818.7" y="407.8" width="3" height="19.7" fill="#4cae9e"/><line x1="824.4" y1="396.6" x2="824.4" y2="411.0" stroke="#4cae9e" stroke-width="0.85" stroke-opacity="0.85"/><rect x="822.9" y="400.3" width="3" height="8.5" fill="#4cae9e"/><line x1="828.8" y1="396.6" x2="828.8" y2="410.0" stroke="#e66a60" stroke-width="0.85" stroke-opacity="0.85"/><rect x="827.3" y="401.3" width="3" height="6.5" fill="#e66a60"/><line x1="833.2" y1="401.0" x2="833.2" y2="418.0" stroke="#4cae9e" stroke-width="0.85" stroke-opacity="0.85"/><rect x="831.7" y="405.0" width="3" height="2.0" fill="#4cae9e"/><line x1="837.3" y1="405.0" x2="837.3" y2="423.0" stroke="#e66a60" stroke-width="0.85" stroke-opacity="0.85"/><rect x="835.8" y="407.8" width="3" height="8.5" fill="#e66a60"/><line x1="841.6" y1="413.0" x2="841.6" y2="427.5" stroke="#e66a60" stroke-width="0.85" stroke-opacity="0.85"/><rect x="840.1" y="415.3" width="3" height="9.4" fill="#e66a60"/><line x1="846.0" y1="418.0" x2="846.0" y2="426.0" stroke="#4cae9e" stroke-width="0.85" stroke-opacity="0.85"/><rect x="844.5" y="420.0" width="3" height="3.7" fill="#4cae9e"/><line x1="850.3" y1="413.0" x2="850.3" y2="423.0" stroke="#4cae9e" stroke-width="0.85" stroke-opacity="0.85"/><rect x="848.8" y="415.3" width="3" height="5.7" fill="#4cae9e"/><line x1="854.6" y1="408.0" x2="854.6" y2="416.0" stroke="#4cae9e" stroke-width="0.85" stroke-opacity="0.85"/><rect x="853.1" y="410.6" width="3" height="2.8" fill="#4cae9e"/><line x1="858.7" y1="408.0" x2="858.7" y2="418.0" stroke="#e66a60" stroke-width="0.85" stroke-opacity="0.85"/><rect x="857.2" y="410.6" width="3" height="5.7" fill="#e66a60"/><line x1="863.0" y1="414.0" x2="863.0" y2="440.0" stroke="#e66a60" stroke-width="0.85" stroke-opacity="0.85"/><rect x="861.5" y="416.3" width="3" height="18.7" fill="#e66a60"/><line x1="867.3" y1="432.0" x2="867.3" y2="448.0" stroke="#e66a60" stroke-width="0.85" stroke-opacity="0.85"/><rect x="865.8" y="435.0" width="3" height="3.8" fill="#e66a60"/><line x1="871.6" y1="400.3" x2="871.6" y2="441.0" stroke="#4cae9e" stroke-width="0.85" stroke-opacity="0.85"/><rect x="870.1" y="406.9" width="3" height="31.9" fill="#4cae9e"/><line x1="876.0" y1="405.0" x2="876.0" y2="420.0" stroke="#e66a60" stroke-width="0.85" stroke-opacity="0.85"/><rect x="874.5" y="407.8" width="3" height="9.4" fill="#e66a60"/><line x1="880.3" y1="415.0" x2="880.3" y2="433.0" stroke="#e66a60" stroke-width="0.85" stroke-opacity="0.85"/><rect x="878.8" y="417.2" width="3" height="13.1" fill="#e66a60"/><line x1="884.4" y1="426.0" x2="884.4" y2="445.0" stroke="#e66a60" stroke-width="0.85" stroke-opacity="0.85"/><rect x="882.9" y="428.4" width="3" height="7.6" fill="#e66a60"/><line x1="888.7" y1="417.0" x2="888.7" y2="430.0" stroke="#e66a60" stroke-width="0.85" stroke-opacity="0.85"/><rect x="887.2" y="420.0" width="3" height="7.5" fill="#e66a60"/><line x1="893.2" y1="400.3" x2="893.2" y2="431.0" stroke="#4cae9e" stroke-width="0.85" stroke-opacity="0.85"/><rect x="891.7" y="405.0" width="3" height="23.4" fill="#4cae9e"/><line x1="897.5" y1="402.0" x2="897.5" y2="418.0" stroke="#e66a60" stroke-width="0.85" stroke-opacity="0.85"/><rect x="896.0" y="404.0" width="3" height="9.4" fill="#e66a60"/><line x1="901.6" y1="374.0" x2="901.6" y2="416.0" stroke="#4cae9e" stroke-width="0.85" stroke-opacity="0.85"/><rect x="900.1" y="378.8" width="3" height="34.6" fill="#4cae9e"/><line x1="906.0" y1="376.0" x2="906.0" y2="395.0" stroke="#e66a60" stroke-width="0.85" stroke-opacity="0.85"/><rect x="904.5" y="378.8" width="3" height="14.0" fill="#e66a60"/><line x1="910.3" y1="390.0" x2="910.3" y2="413.0" stroke="#e66a60" stroke-width="0.85" stroke-opacity="0.85"/><rect x="908.8" y="392.8" width="3" height="17.8" fill="#e66a60"/><line x1="914.4" y1="407.0" x2="914.4" y2="420.0" stroke="#e66a60" stroke-width="0.85" stroke-opacity="0.85"/><rect x="912.9" y="409.7" width="3" height="7.5" fill="#e66a60"/><line x1="918.7" y1="414.0" x2="918.7" y2="421.0" stroke="#e66a60" stroke-width="0.85" stroke-opacity="0.85"/><rect x="917.2" y="416.5" width="3" height="1.5" fill="#e66a60"/><line x1="923.0" y1="405.0" x2="923.0" y2="426.0" stroke="#4cae9e" stroke-width="0.85" stroke-opacity="0.85"/><rect x="921.5" y="407.0" width="3" height="11.6" fill="#4cae9e"/><line x1="927.3" y1="389.7" x2="927.3" y2="410.0" stroke="#4cae9e" stroke-width="0.85" stroke-opacity="0.85"/><rect x="925.8" y="398.9" width="3" height="8.4" fill="#4cae9e"/><line x1="931.6" y1="392.5" x2="931.6" y2="401.0" stroke="#4cae9e" stroke-width="0.85" stroke-opacity="0.85"/><rect x="930.1" y="396.0" width="3" height="2.9" fill="#4cae9e"/><line x1="935.8" y1="394.0" x2="935.8" y2="406.6" stroke="#e66a60" stroke-width="0.85" stroke-opacity="0.85"/><rect x="934.3" y="396.0" width="3" height="3.6" fill="#e66a60"/><line x1="940.0" y1="376.0" x2="940.0" y2="402.0" stroke="#4cae9e" stroke-width="0.85" stroke-opacity="0.85"/><rect x="938.5" y="391.8" width="3" height="7.8" fill="#4cae9e"/><line x1="944.6" y1="391.0" x2="944.6" y2="399.6" stroke="#e66a60" stroke-width="0.85" stroke-opacity="0.85"/><rect x="943.1" y="393.2" width="3" height="2.1" fill="#e66a60"/><line x1="948.8" y1="387.6" x2="948.8" y2="398.0" stroke="#4cae9e" stroke-width="0.85" stroke-opacity="0.85"/><rect x="947.3" y="389.0" width="3" height="6.3" fill="#4cae9e"/><line x1="953.0" y1="371.0" x2="953.0" y2="392.0" stroke="#4cae9e" stroke-width="0.85" stroke-opacity="0.85"/><rect x="951.5" y="373.4" width="3" height="16.3" fill="#4cae9e"/><line x1="957.3" y1="362.0" x2="957.3" y2="379.0" stroke="#4cae9e" stroke-width="0.85" stroke-opacity="0.85"/><rect x="955.8" y="370.6" width="3" height="3.4" fill="#4cae9e"/><line x1="961.5" y1="369.0" x2="961.5" y2="398.0" stroke="#e66a60" stroke-width="0.85" stroke-opacity="0.85"/><rect x="960.0" y="371.3" width="3" height="21.9" fill="#e66a60"/><line x1="965.8" y1="390.0" x2="965.8" y2="408.0" stroke="#e66a60" stroke-width="0.85" stroke-opacity="0.85"/><rect x="964.3" y="393.2" width="3" height="4.3" fill="#e66a60"/><line x1="970.0" y1="391.8" x2="970.0" y2="404.5" stroke="#e66a60" stroke-width="0.85" stroke-opacity="0.85"/><rect x="968.5" y="397.5" width="3" height="2.8" fill="#e66a60"/><line x1="974.0" y1="393.0" x2="974.0" y2="399.0" stroke="#e66a60" stroke-width="0.85" stroke-opacity="0.85"/><rect x="972.5" y="396.5" width="3" height="1.2" fill="#e66a60"/><line x1="978.5" y1="395.0" x2="978.5" y2="415.0" stroke="#e66a60" stroke-width="0.85" stroke-opacity="0.85"/><rect x="977.0" y="397.5" width="3" height="15.5" fill="#e66a60"/><line x1="982.7" y1="391.0" x2="982.7" y2="415.0" stroke="#4cae9e" stroke-width="0.85" stroke-opacity="0.85"/><rect x="981.2" y="393.2" width="3" height="20.5" fill="#4cae9e"/><rect x="983" y="34" width="41" height="447" fill="#161a23"/><line x1="983.5" y1="34" x2="983.5" y2="469" stroke="#a4a4d4" stroke-width="1.1"/><line x1="0" y1="468.7" x2="983.5" y2="468.7" stroke="#8e9098" stroke-width="1.2"/><line x1="983" y1="39.4" x2="986" y2="39.4" stroke="#c8c8d0" stroke-width="1"/><text x="986.5" y="41.8" fill="#d0d0d6" font-size="6.9" font-family="Liberation Sans">126535.35</text><line x1="983" y1="55.3" x2="986" y2="55.3" stroke="#c8c8d0" stroke-width="1"/><text x="986.5" y="57.7" fill="#d0d0d6" font-size="6.9" font-family="Liberation Sans">124047.30</text><line x1="983" y1="71.2" x2="986" y2="71.2" stroke="#c8c8d0" stroke-width="1"/><text x="986.5" y="73.6" fill="#d0d0d6" font-size="6.9" font-family="Liberation Sans">121559.25</text><line x1="983" y1="87.0" x2="986" y2="87.0" stroke="#c8c8d0" stroke-width="1"/><text x="986.5" y="89.4" fill="#d0d0d6" font-size="6.9" font-family="Liberation Sans">119071.20</text><line x1="983" y1="102.9" x2="986" y2="102.9" stroke="#c8c8d0" stroke-width="1"/><text x="986.5" y="105.3" fill="#d0d0d6" font-size="6.9" font-family="Liberation Sans">116583.15</text><line x1="983" y1="118.8" x2="986" y2="118.8" stroke="#c8c8d0" stroke-width="1"/><text x="986.5" y="121.2" fill="#d0d0d6" font-size="6.9" font-family="Liberation Sans">114095.10</text><line x1="983" y1="134.7" x2="986" y2="134.7" stroke="#c8c8d0" stroke-width="1"/><text x="986.5" y="137.1" fill="#d0d0d6" font-size="6.9" font-family="Liberation Sans">111607.05</text><line x1="983" y1="150.6" x2="986" y2="150.6" stroke="#c8c8d0" stroke-width="1"/><text x="986.5" y="153.0" fill="#d0d0d6" font-size="6.9" font-family="Liberation Sans">109119.00</text><line x1="983" y1="166.4" x2="986" y2="166.4" stroke="#c8c8d0" stroke-width="1"/><text x="986.5" y="168.8" fill="#d0d0d6" font-size="6.9" font-family="Liberation Sans">106630.95</text><line x1="983" y1="182.3" x2="986" y2="182.3" stroke="#c8c8d0" stroke-width="1"/><text x="986.5" y="184.7" fill="#d0d0d6" font-size="6.9" font-family="Liberation Sans">104142.90</text><line x1="983" y1="198.2" x2="986" y2="198.2" stroke="#c8c8d0" stroke-width="1"/><text x="986.5" y="200.6" fill="#d0d0d6" font-size="6.9" font-family="Liberation Sans">101654.85</text><line x1="983" y1="214.1" x2="986" y2="214.1" stroke="#c8c8d0" stroke-width="1"/><text x="986.5" y="216.5" fill="#d0d0d6" font-size="6.9" font-family="Liberation Sans">99166.80</text><line x1="983" y1="230.0" x2="986" y2="230.0" stroke="#c8c8d0" stroke-width="1"/><text x="986.5" y="232.4" fill="#d0d0d6" font-size="6.9" font-family="Liberation Sans">96678.75</text><line x1="983" y1="245.8" x2="986" y2="245.8" stroke="#c8c8d0" stroke-width="1"/><text x="986.5" y="248.2" fill="#d0d0d6" font-size="6.9" font-family="Liberation Sans">94190.70</text><line x1="983" y1="261.7" x2="986" y2="261.7" stroke="#c8c8d0" stroke-width="1"/><text x="986.5" y="264.1" fill="#d0d0d6" font-size="6.9" font-family="Liberation Sans">91702.65</text><line x1="983" y1="277.6" x2="986" y2="277.6" stroke="#c8c8d0" stroke-width="1"/><text x="986.5" y="280.0" fill="#d0d0d6" font-size="6.9" font-family="Liberation Sans">89214.60</text><line x1="983" y1="293.5" x2="986" y2="293.5" stroke="#c8c8d0" stroke-width="1"/><text x="986.5" y="295.9" fill="#d0d0d6" font-size="6.9" font-family="Liberation Sans">86726.55</text><line x1="983" y1="309.4" x2="986" y2="309.4" stroke="#c8c8d0" stroke-width="1"/><text x="986.5" y="311.8" fill="#d0d0d6" font-size="6.9" font-family="Liberation Sans">84238.50</text><line x1="983" y1="325.3" x2="986" y2="325.3" stroke="#c8c8d0" stroke-width="1"/><text x="986.5" y="327.7" fill="#d0d0d6" font-size="6.9" font-family="Liberation Sans">81750.45</text><line x1="983" y1="341.1" x2="986" y2="341.1" stroke="#c8c8d0" stroke-width="1"/><text x="986.5" y="343.5" fill="#d0d0d6" font-size="6.9" font-family="Liberation Sans">79262.40</text><line x1="983" y1="357.0" x2="986" y2="357.0" stroke="#c8c8d0" stroke-width="1"/><text x="986.5" y="359.4" fill="#d0d0d6" font-size="6.9" font-family="Liberation Sans">76774.35</text><line x1="983" y1="372.9" x2="986" y2="372.9" stroke="#c8c8d0" stroke-width="1"/><text x="986.5" y="375.3" fill="#d0d0d6" font-size="6.9" font-family="Liberation Sans">74286.30</text><line x1="983" y1="388.8" x2="986" y2="388.8" stroke="#c8c8d0" stroke-width="1"/><text x="986.5" y="391.2" fill="#d0d0d6" font-size="6.9" font-family="Liberation Sans">71798.25</text><line x1="983" y1="404.7" x2="986" y2="404.7" stroke="#c8c8d0" stroke-width="1"/><text x="986.5" y="407.1" fill="#d0d0d6" font-size="6.9" font-family="Liberation Sans">69310.20</text><line x1="983" y1="420.5" x2="986" y2="420.5" stroke="#c8c8d0" stroke-width="1"/><text x="986.5" y="422.9" fill="#d0d0d6" font-size="6.9" font-family="Liberation Sans">66822.15</text><line x1="983" y1="436.4" x2="986" y2="436.4" stroke="#c8c8d0" stroke-width="1"/><text x="986.5" y="438.8" fill="#d0d0d6" font-size="6.9" font-family="Liberation Sans">64334.10</text><line x1="983" y1="452.3" x2="986" y2="452.3" stroke="#c8c8d0" stroke-width="1"/><text x="986.5" y="454.7" fill="#d0d0d6" font-size="6.9" font-family="Liberation Sans">61846.05</text><rect x="985" y="391" width="33" height="7" fill="#2f9c8f"/><text x="986.5" y="396.6" fill="#e8f5f3" font-size="6.9" font-family="Liberation Sans">71040.80</text><line x1="-1.5" y1="468" x2="-1.5" y2="471" stroke="#c0c0c8" stroke-width="1"/><text x="-1.5" y="477" fill="#dcdce0" stroke="#dcdce0" stroke-width="0.1" font-size="6.6" font-family="Liberation Sans">5 Aug 2025</text><line x1="66.9" y1="468" x2="66.9" y2="471" stroke="#c0c0c8" stroke-width="1"/><text x="66.9" y="477" fill="#dcdce0" stroke="#dcdce0" stroke-width="0.1" font-size="6.6" font-family="Liberation Sans">21 Aug 2025</text><line x1="135.3" y1="468" x2="135.3" y2="471" stroke="#c0c0c8" stroke-width="1"/><text x="135.3" y="477" fill="#dcdce0" stroke="#dcdce0" stroke-width="0.1" font-size="6.6" font-family="Liberation Sans">6 Sep 2025</text><line x1="203.8" y1="468" x2="203.8" y2="471" stroke="#c0c0c8" stroke-width="1"/><text x="203.8" y="477" fill="#dcdce0" stroke="#dcdce0" stroke-width="0.1" font-size="6.6" font-family="Liberation Sans">22 Sep 2025</text><line x1="272.2" y1="468" x2="272.2" y2="471" stroke="#c0c0c8" stroke-width="1"/><text x="272.2" y="477" fill="#dcdce0" stroke="#dcdce0" stroke-width="0.1" font-size="6.6" font-family="Liberation Sans">8 Oct 2025</text><line x1="340.6" y1="468" x2="340.6" y2="471" stroke="#c0c0c8" stroke-width="1"/><text x="340.6" y="477" fill="#dcdce0" stroke="#dcdce0" stroke-width="0.1" font-size="6.6" font-family="Liberation Sans">24 Oct 2025</text><line x1="409.1" y1="468" x2="409.1" y2="471" stroke="#c0c0c8" stroke-width="1"/><text x="409.1" y="477" fill="#dcdce0" stroke="#dcdce0" stroke-width="0.1" font-size="6.6" font-family="Liberation Sans">9 Nov 2025</text><line x1="477.5" y1="468" x2="477.5" y2="471" stroke="#c0c0c8" stroke-width="1"/><text x="477.5" y="477" fill="#dcdce0" stroke="#dcdce0" stroke-width="0.1" font-size="6.6" font-family="Liberation Sans">25 Nov 2025</text><line x1="545.9" y1="468" x2="545.9" y2="471" stroke="#c0c0c8" stroke-width="1"/><text x="545.9" y="477" fill="#dcdce0" stroke="#dcdce0" stroke-width="0.1" font-size="6.6" font-family="Liberation Sans">11 Dec 2025</text><line x1="614.3" y1="468" x2="614.3" y2="471" stroke="#c0c0c8" stroke-width="1"/><text x="614.3" y="477" fill="#dcdce0" stroke="#dcdce0" stroke-width="0.1" font-size="6.6" font-family="Liberation Sans">27 Dec 2025</text><line x1="682.8" y1="468" x2="682.8" y2="471" stroke="#c0c0c8" stroke-width="1"/><text x="682.8" y="477" fill="#dcdce0" stroke="#dcdce0" stroke-width="0.1" font-size="6.6" font-family="Liberation Sans">12 Jan 2026</text><line x1="751.2" y1="468" x2="751.2" y2="471" stroke="#c0c0c8" stroke-width="1"/><text x="751.2" y="477" fill="#dcdce0" stroke="#dcdce0" stroke-width="0.1" font-size="6.6" font-family="Liberation Sans">28 Jan 2026</text><line x1="819.6" y1="468" x2="819.6" y2="471" stroke="#c0c0c8" stroke-width="1"/><text x="819.6" y="477" fill="#dcdce0" stroke="#dcdce0" stroke-width="0.1" font-size="6.6" font-family="Liberation Sans">13 Feb 2026</text><line x1="888.1" y1="468" x2="888.1" y2="471" stroke="#c0c0c8" stroke-width="1"/><text x="888.1" y="477" fill="#dcdce0" stroke="#dcdce0" stroke-width="0.1" font-size="6.6" font-family="Liberation Sans">1 Mar 2026</text><line x1="956.5" y1="468" x2="956.5" y2="471" stroke="#c0c0c8" stroke-width="1"/><text x="956.5" y="477" fill="#dcdce0" stroke="#dcdce0" stroke-width="0.1" font-size="6.6" font-family="Liberation Sans">17 Mar 2026</text><rect x="0" y="480" width="1024" height="1" fill="#3a3d45"/><g><rect x="2" y="38.3" width="9.5" height="6.3" fill="#f3b3b3"/><rect x="6.8" y="38.3" width="4.7" height="6.3" fill="#b8d0ee"/><line x1="2" y1="41.5" x2="11.5" y2="41.5" stroke="#ffffff" stroke-width="0.6"/><line x1="6.7" y1="38.3" x2="6.7" y2="44.6" stroke="#ffffff" stroke-width="0.6"/><rect x="16" y="38.3" width="10" height="6.3" fill="#a8cff0"/><rect x="16" y="38.3" width="5" height="6.3" fill="#f2a8a8"/><rect x="18" y="38.3" width="3" height="2.5" fill="#161a23"/><rect x="21.5" y="41" width="2.5" height="3.6" fill="#161a23"/></g><text x="30" y="44.4" fill="#cfd0d3" stroke="#cfd0d3" stroke-width="0.15" font-size="6.1" font-family="Liberation Sans" textLength="42.7" lengthAdjust="spacingAndGlyphs">BTCUSD, Daily:</text><path d="M855.5,35 L862.5,35 L859,38.5 Z" fill="#f0f0f0"/></svg>
<svg width="1024" height="36" viewBox="0 0 1024 36" style="position:absolute;left:0;top:0"><rect x="0" y="14" width="1024" height="1" fill="#dcdcdc"/><rect x="0" y="15" width="1024" height="17" fill="#f0f0f0"/><text x="7" y="27.4" fill="#5a7ea6" font-size="8.2" font-family="Liberation Sans" textLength="11.8" lengthAdjust="spacingAndGlyphs" stroke="#5a7ea6" stroke-width="0.25">IDE</text><path d="M28.5,26 H34.5 M31.5,23 V29" stroke="#333" stroke-width="1.1"/><rect x="33.5" y="19" width="6" height="5.5" rx="1" fill="#5f9fd6"/><path d="M35.5,20.5 V23 M37.5,20.5 V23" stroke="#e8f2fb" stroke-width="0.8"/><rect x="49.5" y="23.2" width="3.8" height="6.2" rx="1.9" fill="none" stroke="#4fc24f" stroke-width="1.2"/><rect x="56" y="23.2" width="3.8" height="6.2" rx="1.9" fill="none" stroke="#4fc24f" stroke-width="1.2"/><path d="M51,22 Q55,17.5 58.5,20.5" fill="none" stroke="#444" stroke-width="0.9"/><path d="M57,19 L59,21 L59.3,18.6 Z" fill="#444"/><rect x="66" y="16.3" width="1" height="16.4" fill="#c8c8c8"/><text x="354.0" y="27.8" text-anchor="middle" fill="#3478a0" font-size="8.8" font-family="Liberation Sans" textLength="11.1" lengthAdjust="spacingAndGlyphs">M1</text><text x="374.8" y="27.8" text-anchor="middle" fill="#3478a0" font-size="8.8" font-family="Liberation Sans" textLength="11.1" lengthAdjust="spacingAndGlyphs">M5</text><text x="395.7" y="27.8" text-anchor="middle" fill="#3478a0" font-size="8.8" font-family="Liberation Sans" textLength="15.6" lengthAdjust="spacingAndGlyphs">M15</text><text x="416.5" y="27.8" text-anchor="middle" fill="#3478a0" font-size="8.8" font-family="Liberation Sans" textLength="15.6" lengthAdjust="spacingAndGlyphs">M30</text><text x="437.3" y="27.8" text-anchor="middle" fill="#3478a0" font-size="8.8" font-family="Liberation Sans" textLength="10.2" lengthAdjust="spacingAndGlyphs">H1</text><text x="458.1" y="27.8" text-anchor="middle" fill="#3478a0" font-size="8.8" font-family="Liberation Sans" textLength="10.2" lengthAdjust="spacingAndGlyphs">H4</text><rect x="469.5" y="15" width="18.5" height="17.5" fill="#d5e3f0"/><text x="479.0" y="27.8" text-anchor="middle" fill="#3478a0" font-size="8.8" font-family="Liberation Sans" textLength="10.2" lengthAdjust="spacingAndGlyphs">D1</text><text x="499.8" y="27.8" text-anchor="middle" fill="#3478a0" font-size="8.8" font-family="Liberation Sans" textLength="12.0" lengthAdjust="spacingAndGlyphs">W1</text><text x="520.6" y="27.8" text-anchor="middle" fill="#3478a0" font-size="8.8" font-family="Liberation Sans" textLength="12.4" lengthAdjust="spacingAndGlyphs">MN</text><rect x="533" y="17" width="1" height="1" fill="#b8b8b8"/><rect x="533" y="19" width="1" height="1" fill="#b8b8b8"/><rect x="533" y="21" width="1" height="1" fill="#b8b8b8"/><rect x="533" y="23" width="1" height="1" fill="#b8b8b8"/><rect x="533" y="25" width="1" height="1" fill="#b8b8b8"/><rect x="533" y="27" width="1" height="1" fill="#b8b8b8"/><rect x="533" y="29" width="1" height="1" fill="#b8b8b8"/><rect x="533" y="31" width="1" height="1" fill="#b8b8b8"/><rect x="539.4" y="15" width="18.6" height="17.5" fill="#d5e3f0"/><path d="M543.5,19.5 L551,22.5 L548,24 L550.5,27 L549.5,27.8 L547,25 L545,27.5 Z" fill="none" stroke="#4f86b0" stroke-width="1"/><path d="M563,23.8 H572 M567.5,19.3 V28.3" stroke="#4f86b0" stroke-width="1"/><circle cx="567.5" cy="23.8" r="1" fill="#4f86b0"/><rect x="579" y="16.5" width="1" height="16" fill="#c8c8c8"/><path d="M591.6,19 V29" stroke="#4f86b0" stroke-width="1"/><circle cx="591.6" cy="24" r="1.3" fill="#4f86b0"/><path d="M606,23.8 H618" stroke="#4f86b0" stroke-width="1"/><circle cx="612" cy="23.8" r="1.3" fill="#4f86b0"/><path d="M628.5,28 L637.5,19.5" stroke="#4f86b0" stroke-width="1.1"/><circle cx="628.5" cy="28" r="1.3" fill="#4f86b0"/><circle cx="637.5" cy="19.5" r="1.3" fill="#4f86b0"/><rect x="649" y="19" width="10" height="9.5" fill="none" stroke="#4f86b0" stroke-width="1.1"/><circle cx="649" cy="19" r="1.3" fill="#4f86b0"/><circle cx="659" cy="19" r="1.3" fill="#4f86b0"/><circle cx="649" cy="28.5" r="1.3" fill="#4f86b0"/><circle cx="659" cy="28.5" r="1.3" fill="#4f86b0"/><path d="M670,19.5 H681 M670,23.5 H681 M670,27.5 H681" stroke="#4f86b0" stroke-width="1"/><circle cx="670.5" cy="27.5" r="1.2" fill="#4f86b0"/><circle cx="680.5" cy="23.5" r="1.2" fill="#4f86b0"/><text x="696" y="27.8" text-anchor="middle" fill="#4f86b0" font-size="10" font-family="Liberation Sans">T</text><path d="M711,19.5 H723 M711,22 H723 M711.5,28 Q717,20 722.5,28" fill="none" stroke="#4f86b0" stroke-width="1"/><circle cx="711.8" cy="28" r="1.2" fill="#4f86b0"/><circle cx="722" cy="28" r="1.2" fill="#4f86b0"/><path d="M734,23 L736.3,19 L738.6,23 Z" fill="none" stroke="#4f86b0" stroke-width="1"/><circle cx="741.5" cy="21" r="1.8" fill="none" stroke="#4f86b0" stroke-width="1"/><circle cx="736" cy="26.8" r="1.8" fill="none" stroke="#4f86b0" stroke-width="1"/><rect x="739.7" y="25" width="3.6" height="3.6" fill="none" stroke="#4f86b0" stroke-width="1"/><path d="M747.5,24 L751.5,24 L749.5,26 Z" fill="#222"/><circle cx="931.5" cy="23" r="3.3" fill="none" stroke="#444" stroke-width="1.1"/><path d="M933.8,25.4 L936,27.6" stroke="#444" stroke-width="1.3"/><circle cx="952.7" cy="23.5" r="3.4" fill="none" stroke="#555" stroke-width="1"/><circle cx="952.7" cy="22.5" r="1.2" fill="none" stroke="#555" stroke-width="0.8"/><circle cx="959" cy="22" r="4.6" fill="#e0392b"/><text x="959" y="24.6" text-anchor="middle" fill="#fff" font-size="7" font-weight="bold" font-family="Liberation Sans">1</text><path d="M980,18.8 L982.6,21.4 L980,24.2 L977.4,21.4 Z" fill="#52b06c"/><path d="M978.6,21.4 L981.4,21.4" stroke="#d8efd8" stroke-width="0.7"/><text x="980" y="29" text-anchor="middle" fill="#4a9e62" font-size="4.6" font-weight="bold" font-family="Liberation Sans" textLength="7" lengthAdjust="spacingAndGlyphs">LVL</text><rect x="990.5" y="20.5" width="30" height="8.5" fill="#ffffff" stroke="#c9c9c9" stroke-width="1"/><rect x="991" y="21" width="13" height="7.5" fill="#3fd03f"/><rect x="0" y="32" width="1024" height="1.3" fill="#fbfbfb"/><rect x="0" y="33.3" width="1024" height="2.5" fill="#5c5f66"/></svg>
<div class="mb">
<svg width="12" height="14" style="position:absolute;left:1px;top:0"><rect x="1.5" y="4.8" width="3.6" height="7" rx="1.8" fill="none" stroke="#62c462" stroke-width="1.3"/><rect x="5.6" y="4.8" width="3.6" height="7" rx="1.8" fill="none" stroke="#62c462" stroke-width="1.3"/></svg>
<div class="mi" style="left:18.5px">Plik</div>
<div class="mi" style="left:44.4px">Widok</div>
<div class="mi" style="left:74.5px;width:37.6px;height:11.7px;top:2px;background:#0078d7;"></div>
<div class="mi" style="left:81.4px;color:#fff">Wstaw</div>
<div class="mi" style="left:118.8px">Wykresy</div>
<div class="mi" style="left:161.9px">Narzędzia</div>
<div class="mi" style="left:211.6px">Okno</div>
<div class="mi" style="left:244.5px">Pomoc</div>
<svg width="40" height="14" style="position:absolute;left:984px;top:0">
<path d="M4,7.5 H11" stroke="#9a9a9a" stroke-width="1"/>
<rect x="17" y="4.5" width="5.5" height="5.5" fill="none" stroke="#9a9a9a" stroke-width="1"/><path d="M18.5,3 H24 V8.5" fill="none" stroke="#9a9a9a" stroke-width="1"/>
<path d="M29.5,4 L36,10.5 M36,4 L29.5,10.5" stroke="#9a9a9a" stroke-width="1"/>
</svg>
</div>
<div class="mb" style="top:14px;height:1px;background:#d6d6d6"></div>
<div class="menu" style="left:74.5px;top:14.8px;width:109.5px;height:60.2px"><div class="it sel" style="top:-0.3px;left:1px;right:0px"><span style="position:absolute;left:18.8px">Wskaźniki</span><span class="arr" style="left:101.5px"></span></div><div class="it" style="top:14.3px;left:1px;right:0px"><span style="position:absolute;left:18.8px">Obiekt</span><span class="arr" style="left:101.5px"></span></div><div class="it" style="top:29.1px;left:1px;right:0px"><span style="position:absolute;left:18.8px">Eksperci</span><span class="arr" style="left:101.5px"></span></div><div class="it" style="top:43.6px;left:1px;right:0px"><span style="position:absolute;left:18.8px">Skrypty</span><span class="arr" style="left:101.5px"></span></div></div><div class="menu" style="left:183.5px;top:14.8px;width:157.5px;height:151.8px"><div class="it" style="top:-0.0px;left:1px;right:0px"><span style="position:absolute;left:19.0px">Williams' Percent Range</span></div><div class="it" style="top:14.4px;left:1px;right:0px"><span style="position:absolute;left:19.0px">Volumes</span></div><div class="it" style="top:28.8px;left:1px;right:0px"><span style="position:absolute;left:19.0px">Variable Index Dynamic Average</span></div><div class="it" style="top:43.2px;left:1px;right:0px"><span style="position:absolute;left:19.0px">Triple Exponential Moving Average</span></div><div class="it" style="top:57.6px;left:1px;right:0px"><span style="position:absolute;left:19.0px">Triple Exponential Average</span></div><div class="sep" style="top:76.0px"></div><div class="it sel" style="top:77.9px;left:1px;right:0px"><span style="position:absolute;left:19.0px">Wskaźniki trendu</span><span class="arr" style="left:147.0px"></span></div><div class="it" style="top:92.3px;left:1px;right:0px"><span style="position:absolute;left:19.0px">Oscylatory</span><span class="arr" style="left:147.0px"></span></div><div class="it" style="top:106.7px;left:1px;right:0px"><span style="position:absolute;left:19.0px">Wolumeny</span><span class="arr" style="left:147.0px"></span></div><div class="it" style="top:121.1px;left:1px;right:0px"><span style="position:absolute;left:19.0px">Wskaźniki Billa Williamsa</span><span class="arr" style="left:147.0px"></span></div><div class="it" style="top:135.5px;left:1px;right:0px"><span style="position:absolute;left:19.0px">Dostosuj</span><span class="arr" style="left:147.0px"></span></div></div><div class="menu" style="left:338.5px;top:92px;width:191px;height:189.5px"><div class="it" style="top:0.6px;left:1px;right:0px"><span style="position:absolute;left:18.8px">Adaptive Moving Average</span></div><div class="it" style="top:15.0px;left:1px;right:0px"><span style="position:absolute;left:18.8px">Average Directional Movement Index</span></div><div class="it" style="top:29.5px;left:1px;right:0px"><span style="position:absolute;left:18.8px">Average Directional Movement Index Wilder</span></div><div class="it" style="top:43.9px;left:1px;right:0px"><span style="position:absolute;left:18.8px">Bollinger Bands</span></div><div class="it" style="top:58.3px;left:1px;right:0px"><span style="position:absolute;left:18.8px">Double Exponential Moving Average</span></div><div class="it" style="top:72.8px;left:1px;right:0px"><span style="position:absolute;left:18.8px">Envelopes</span></div><div class="it" style="top:87.2px;left:1px;right:0px"><span style="position:absolute;left:18.8px">Fractal Adaptive Moving Average</span></div><div class="it sel" style="top:101.6px;left:1px;right:0px"><span style="position:absolute;left:18.8px">Ichimoku Kinko Hyo</span></div><div class="it" style="top:116.0px;left:1px;right:0px"><span style="position:absolute;left:18.8px">Moving Average</span></div><div class="it" style="top:130.5px;left:1px;right:0px"><span style="position:absolute;left:18.8px">Parabolic SAR</span></div><div class="it" style="top:144.9px;left:1px;right:0px"><span style="position:absolute;left:18.8px">Standard Deviation</span></div><div class="it" style="top:159.3px;left:1px;right:0px"><span style="position:absolute;left:18.8px">Triple Exponential Moving Average</span></div><div class="it" style="top:173.8px;left:1px;right:0px"><span style="position:absolute;left:18.8px">Variable Index Dynamic Average</span></div></div></body></html>
